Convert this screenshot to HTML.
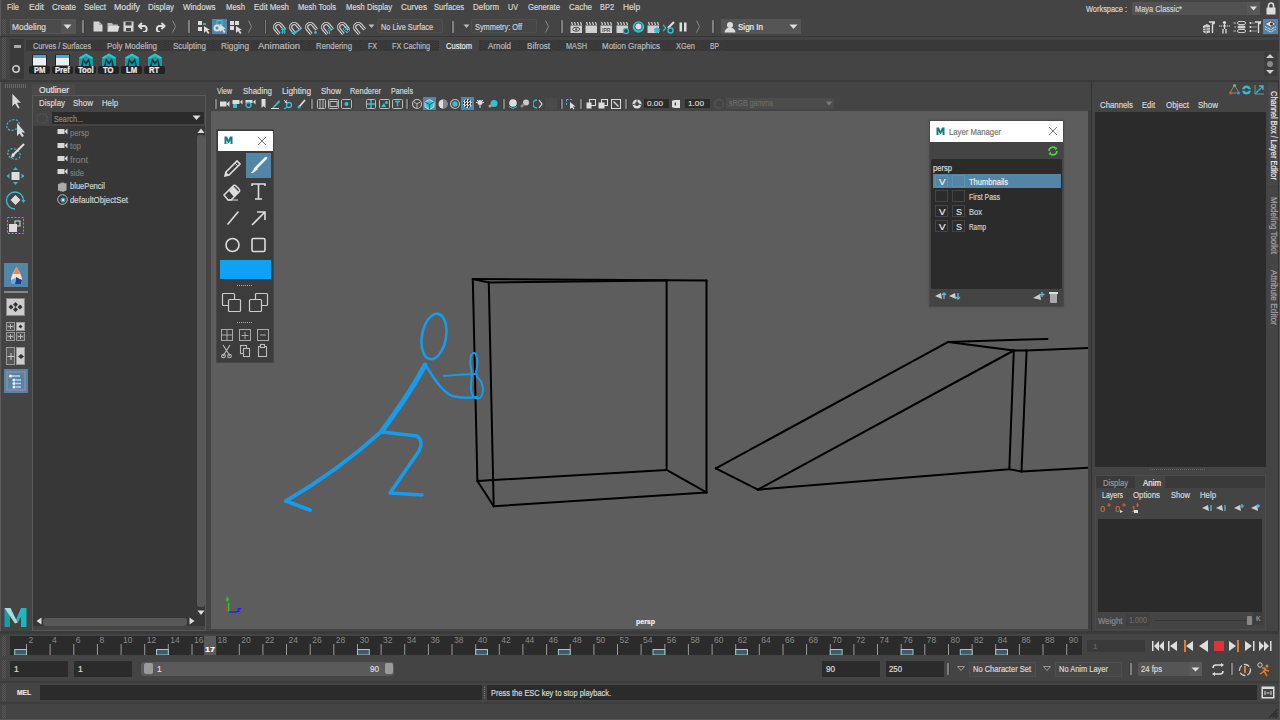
<!DOCTYPE html><html><head><meta charset="utf-8"><style>
html,body{margin:0;padding:0;width:1280px;height:720px;overflow:hidden;background:#444;}
body>div,body>svg{position:absolute;}
.t{position:absolute;white-space:nowrap;font-family:"Liberation Sans",sans-serif;-webkit-text-stroke:0.2px currentColor;}
svg text{font-family:"Liberation Sans",sans-serif;}
</style></head><body>
<div style="left:0px;top:0px;width:1280px;height:720px;background:#444444;"></div>
<div style="left:0px;top:0px;width:1px;height:720px;background:#5a5a5a;"></div>
<div class="t" style="left:6.5px;top:2.80px;font-size:8.5px;line-height:8.5px;color:#d6d6d6;transform:scaleX(0.876);transform-origin:0 0;">File</div>
<div class="t" style="left:28.75px;top:2.80px;font-size:8.5px;line-height:8.5px;color:#d6d6d6;transform:scaleX(1.024);transform-origin:0 0;">Edit</div>
<div class="t" style="left:51.75px;top:2.80px;font-size:8.5px;line-height:8.5px;color:#d6d6d6;transform:scaleX(0.941);transform-origin:0 0;">Create</div>
<div class="t" style="left:83.75px;top:2.80px;font-size:8.5px;line-height:8.5px;color:#d6d6d6;transform:scaleX(0.931);transform-origin:0 0;">Select</div>
<div class="t" style="left:113.75px;top:2.80px;font-size:8.5px;line-height:8.5px;color:#d6d6d6;transform:scaleX(1.039);transform-origin:0 0;">Modify</div>
<div class="t" style="left:148px;top:2.80px;font-size:8.5px;line-height:8.5px;color:#d6d6d6;transform:scaleX(0.933);transform-origin:0 0;">Display</div>
<div class="t" style="left:182.5px;top:2.80px;font-size:8.5px;line-height:8.5px;color:#d6d6d6;transform:scaleX(0.943);transform-origin:0 0;">Windows</div>
<div class="t" style="left:225.5px;top:2.80px;font-size:8.5px;line-height:8.5px;color:#d6d6d6;transform:scaleX(0.914);transform-origin:0 0;">Mesh</div>
<div class="t" style="left:253.75px;top:2.80px;font-size:8.5px;line-height:8.5px;color:#d6d6d6;transform:scaleX(0.926);transform-origin:0 0;">Edit Mesh</div>
<div class="t" style="left:297.5px;top:2.80px;font-size:8.5px;line-height:8.5px;color:#d6d6d6;transform:scaleX(0.887);transform-origin:0 0;">Mesh Tools</div>
<div class="t" style="left:345.75px;top:2.80px;font-size:8.5px;line-height:8.5px;color:#d6d6d6;transform:scaleX(0.902);transform-origin:0 0;">Mesh Display</div>
<div class="t" style="left:401.25px;top:2.80px;font-size:8.5px;line-height:8.5px;color:#d6d6d6;transform:scaleX(0.966);transform-origin:0 0;">Curves</div>
<div class="t" style="left:433.75px;top:2.80px;font-size:8.5px;line-height:8.5px;color:#d6d6d6;transform:scaleX(0.894);transform-origin:0 0;">Surfaces</div>
<div class="t" style="left:472.5px;top:2.80px;font-size:8.5px;line-height:8.5px;color:#d6d6d6;transform:scaleX(0.933);transform-origin:0 0;">Deform</div>
<div class="t" style="left:507.5px;top:2.80px;font-size:8.5px;line-height:8.5px;color:#d6d6d6;transform:scaleX(0.847);transform-origin:0 0;">UV</div>
<div class="t" style="left:528px;top:2.80px;font-size:8.5px;line-height:8.5px;color:#d6d6d6;transform:scaleX(0.903);transform-origin:0 0;">Generate</div>
<div class="t" style="left:569.25px;top:2.80px;font-size:8.5px;line-height:8.5px;color:#d6d6d6;transform:scaleX(0.936);transform-origin:0 0;">Cache</div>
<div class="t" style="left:599.5px;top:2.80px;font-size:8.5px;line-height:8.5px;color:#d6d6d6;transform:scaleX(0.871);transform-origin:0 0;">BP2</div>
<div class="t" style="left:622.5px;top:2.80px;font-size:8.5px;line-height:8.5px;color:#d6d6d6;transform:scaleX(0.972);transform-origin:0 0;">Help</div>
<div class="t" style="left:1085.5px;top:4.80px;font-size:8.5px;line-height:8.5px;color:#d6d6d6;transform:scaleX(0.871);transform-origin:0 0;">Workspace :</div>
<div style="left:1132px;top:2px;width:128px;height:13px;background:#525252;border-radius:1px;"></div>
<div style="left:1247px;top:2px;width:13px;height:13px;background:#585858;"></div>
<svg style="position:absolute;left:1249px;top:6px;" width="9" height="5" viewBox="0 0 9 5"><path d="M1 0.5 L8 0.5 L4.5 4.5Z" fill="#ddd"/></svg>
<div class="t" style="left:1134.5px;top:4.80px;font-size:8.5px;line-height:8.5px;color:#d0d0d0;transform:scaleX(0.873);transform-origin:0 0;">Maya Classic*</div>
<svg style="position:absolute;left:1265px;top:2px;" width="12" height="13" viewBox="0 0 12 13"><rect x="1.5" y="5.5" width="9" height="7" fill="#ddd"/><path d="M3.5 6 V3.5 a2.5 2.5 0 0 1 5 0 V6" stroke="#ddd" stroke-width="1.5" fill="none"/></svg>
<div style="left:0px;top:36px;width:1280px;height:1px;background:#363636;"></div>
<div style="left:2px;top:19px;width:4px;height:15px;background:repeating-conic-gradient(#585858 0 25%,#444 0 50%) 0 0/2px 2px;"></div>
<div style="left:10px;top:19px;width:66px;height:15px;background:#4b4b4b;border:1px solid #555;box-sizing:border-box;"></div>
<div style="left:61px;top:20px;width:14px;height:13px;background:#555;"></div>
<svg style="position:absolute;left:62px;top:24px;" width="11" height="6" viewBox="0 0 11 6"><path d="M1.5 0.5 L9.5 0.5 L5.5 5Z" fill="#ddd"/></svg>
<div class="t" style="left:12px;top:22.80px;font-size:8.5px;line-height:8.5px;color:#d8d8d8;transform:scaleX(0.986);transform-origin:0 0;">Modeling</div>
<div style="left:82px;top:20px;width:3px;height:13px;background:linear-gradient(90deg,#383838 0 0.5px,#808080 0.5px 2.5px,#383838 2.5px);border-radius:1px;"></div>
<svg style="position:absolute;left:93px;top:21px;" width="10" height="11" viewBox="0 0 10 11"><path d="M0.5 0.5 H6 L9.5 4 V10.5 H0.5Z" fill="#d4d4d4"/><path d="M6 0.5 V4 H9.5" fill="#aaa"/></svg>
<svg style="position:absolute;left:107px;top:21px;" width="13" height="11" viewBox="0 0 13 11"><path d="M0.5 2 H5 L6 3.5 H11 V10.5 H0.5Z" fill="#bbb"/><path d="M2 5 H12.5 L11 10.5 H0.5Z" fill="#ddd"/></svg>
<svg style="position:absolute;left:123px;top:21px;" width="11" height="11" viewBox="0 0 11 11"><rect x="0.5" y="0.5" width="10" height="10" fill="#d4d4d4"/><rect x="2.5" y="1" width="6" height="3.5" fill="#444"/><rect x="3" y="7" width="5" height="3" fill="#444"/></svg>
<svg style="position:absolute;left:138px;top:21px;" width="12" height="11" viewBox="0 0 12 11"><path d="M4 2 L1 5 L4 8" stroke="#ddd" stroke-width="2" fill="none"/><path d="M1.5 5 H7 a3.5 3.5 0 0 1 0 6 H5" stroke="#ddd" stroke-width="2" fill="none"/></svg>
<svg style="position:absolute;left:153px;top:21px;" width="13" height="11" viewBox="0 0 13 11"><path d="M8.5 2 L11.5 5 L8.5 8" stroke="#ddd" stroke-width="2" fill="none"/><path d="M11 5 H5.5 a3.5 3.5 0 0 0 0 6 H7" stroke="#ddd" stroke-width="2" fill="none"/></svg>
<svg style="position:absolute;left:172px;top:20px;" width="5" height="13" viewBox="0 0 5 13"><path d="M0.5 0.5 L3.5 6.5 L0.5 12.5" stroke="#888" stroke-width="1" fill="none"/></svg>
<div style="left:188px;top:20px;width:3px;height:13px;background:linear-gradient(90deg,#383838 0 0.5px,#808080 0.5px 2.5px,#383838 2.5px);border-radius:1px;"></div>
<svg style="position:absolute;left:197px;top:20px;" width="14" height="14" viewBox="0 0 14 14"><rect x="1" y="1" width="4" height="4" fill="#ddd"/><rect x="1" y="7" width="4" height="4" fill="#ddd"/><path d="M6 4 h3" stroke="#3cb" stroke-width="1.5"/><path d="M7 6 L7 13 L9 11 L11 14 L12.5 13 L10.5 10 L13 10Z" fill="#ddd"/></svg>
<div style="left:212px;top:19px;width:15px;height:15px;background:#5285a6;"></div>
<svg style="position:absolute;left:212px;top:19px;" width="15" height="15" viewBox="0 0 15 15"><rect x="5" y="1.5" width="5" height="4" stroke="#3cd" fill="none"/><circle cx="5" cy="9" r="3.5" fill="#ddd"/><circle cx="5" cy="9" r="1.5" fill="#5285a6"/><path d="M8 5 L8 13 L10 11 L12 14 L13.5 13 L11.5 10 L14 10Z" fill="#ddd"/></svg>
<svg style="position:absolute;left:229px;top:20px;" width="14" height="14" viewBox="0 0 14 14"><rect x="1" y="1" width="4" height="4" fill="#ddd"/><rect x="6" y="1" width="4" height="4" fill="#ddd"/><rect x="1" y="6" width="4" height="4" fill="#ddd"/><path d="M7 6 L7 13 L9 11 L11 14 L12.5 13 L10.5 10 L13 10Z" fill="#ddd"/></svg>
<svg style="position:absolute;left:248px;top:20px;" width="5" height="13" viewBox="0 0 5 13"><path d="M0.5 0.5 L3.5 6.5 L0.5 12.5" stroke="#888" stroke-width="1" fill="none"/></svg>
<div style="left:264px;top:20px;width:3px;height:13px;background:linear-gradient(90deg,#383838 0 0.5px,#808080 0.5px 2.5px,#383838 2.5px);border-radius:1px;"></div>
<svg style="position:absolute;left:272px;top:20px;" width="15" height="15" viewBox="0 0 15 15"><g transform="rotate(-40 6.5 7.5)"><path d="M3 13 V7 a3.5 3.5 0 0 1 7 0 V13" stroke="#d8d8d8" stroke-width="3.2" fill="none"/><path d="M3 13 V7 a3.5 3.5 0 0 1 7 0 V13" stroke="#444" stroke-width="1.1" fill="none"/></g><path d="M9 9.5 h5 M9 12 h5 M10.5 8 v6 M12.5 8 v6" stroke="#3bc" stroke-width="0.9"/></svg>
<svg style="position:absolute;left:288px;top:20px;" width="15" height="15" viewBox="0 0 15 15"><g transform="rotate(-40 6.5 7.5)"><path d="M3 13 V7 a3.5 3.5 0 0 1 7 0 V13" stroke="#d8d8d8" stroke-width="3.2" fill="none"/><path d="M3 13 V7 a3.5 3.5 0 0 1 7 0 V13" stroke="#444" stroke-width="1.1" fill="none"/></g><path d="M5 13 C8 12 11 11 13 8" stroke="#3bc" stroke-width="1.4" fill="none"/><circle cx="4.5" cy="13" r="1" fill="#3bc"/></svg>
<svg style="position:absolute;left:304px;top:20px;" width="15" height="15" viewBox="0 0 15 15"><g transform="rotate(-40 6.5 7.5)"><path d="M3 13 V7 a3.5 3.5 0 0 1 7 0 V13" stroke="#d8d8d8" stroke-width="3.2" fill="none"/><path d="M3 13 V7 a3.5 3.5 0 0 1 7 0 V13" stroke="#444" stroke-width="1.1" fill="none"/></g><circle cx="11.5" cy="12.5" r="1.4" fill="#3bc"/></svg>
<svg style="position:absolute;left:320px;top:20px;" width="15" height="15" viewBox="0 0 15 15"><g transform="rotate(-40 6.5 7.5)"><path d="M3 13 V7 a3.5 3.5 0 0 1 7 0 V13" stroke="#d8d8d8" stroke-width="3.2" fill="none"/><path d="M3 13 V7 a3.5 3.5 0 0 1 7 0 V13" stroke="#444" stroke-width="1.1" fill="none"/></g><circle cx="9.5" cy="9.5" r="1.3" fill="none" stroke="#3bc" stroke-width="0.9"/><path d="M9.5 11 v3 M13 3 v0.1" stroke="#3bc" stroke-width="1.2"/></svg>
<svg style="position:absolute;left:336px;top:20px;" width="15" height="15" viewBox="0 0 15 15"><g transform="rotate(-40 6.5 7.5)"><path d="M3 13 V7 a3.5 3.5 0 0 1 7 0 V13" stroke="#d8d8d8" stroke-width="3.2" fill="none"/><path d="M3 13 V7 a3.5 3.5 0 0 1 7 0 V13" stroke="#444" stroke-width="1.1" fill="none"/></g><path d="M7 9 L10 6 L14 10 L11 13Z M8.5 10.5 L12 7.5 M10 12 L13 9" stroke="#3bc" stroke-width="0.9" fill="none"/></svg>
<svg style="position:absolute;left:352px;top:20px;" width="15" height="15" viewBox="0 0 15 15"><g transform="rotate(-40 6.5 7.5)"><path d="M3 13 V7 a3.5 3.5 0 0 1 7 0 V13" stroke="#d8d8d8" stroke-width="3.2" fill="none"/><path d="M3 13 V7 a3.5 3.5 0 0 1 7 0 V13" stroke="#444" stroke-width="1.1" fill="none"/></g></svg>
<svg style="position:absolute;left:368px;top:24px;" width="7" height="5" viewBox="0 0 7 5"><path d="M0.5 0.5 H6.5 L3.5 4Z" fill="#bbb"/></svg>
<div style="left:377px;top:19px;width:66px;height:14px;background:#464646;border:1px solid #4e4e4e;box-sizing:border-box;border-radius:2px;"></div>
<div class="t" style="left:380.5px;top:22.80px;font-size:8.5px;line-height:8.5px;color:#d0d0d0;transform:scaleX(0.860);transform-origin:0 0;">No Live Surface</div>
<div style="left:451px;top:21px;width:3px;height:12px;background:linear-gradient(90deg,#383838 0 0.5px,#808080 0.5px 2.5px,#383838 2.5px);border-radius:1px;"></div>
<svg style="position:absolute;left:463px;top:24px;" width="7" height="5" viewBox="0 0 7 5"><path d="M0.5 0.5 H6.5 L3.5 4Z" fill="#bbb"/></svg>
<div style="left:471px;top:19px;width:66px;height:14px;background:#464646;border:1px solid #4e4e4e;box-sizing:border-box;border-radius:2px;"></div>
<div class="t" style="left:475px;top:22.80px;font-size:8.5px;line-height:8.5px;color:#d0d0d0;transform:scaleX(0.868);transform-origin:0 0;">Symmetry: Off</div>
<svg style="position:absolute;left:545px;top:20px;" width="5" height="13" viewBox="0 0 5 13"><path d="M0.5 0.5 L3.5 6.5 L0.5 12.5" stroke="#888" stroke-width="1" fill="none"/></svg>
<div style="left:560px;top:20px;width:3px;height:13px;background:linear-gradient(90deg,#383838 0 0.5px,#808080 0.5px 2.5px,#383838 2.5px);border-radius:1px;"></div>
<svg style="position:absolute;left:570px;top:20px;" width="13" height="14" viewBox="0 0 13 14"><path d="M1.5 2 l1 3 M4.5 2 l1 3 M7.5 2 l1 3 M10.5 2 l1 3" stroke="#d0d0d0" stroke-width="1.2"/><rect x="0.5" y="5.5" width="11.5" height="7.5" fill="#d0d0d0"/><ellipse cx="6.2" cy="9.2" rx="3.5" ry="2" fill="none" stroke="#444" stroke-width="1"/><circle cx="6.2" cy="9.2" r="1" fill="#444"/></svg>
<svg style="position:absolute;left:585px;top:20px;" width="13" height="14" viewBox="0 0 13 14"><path d="M1.5 2 l1 3 M4.5 2 l1 3 M7.5 2 l1 3 M10.5 2 l1 3" stroke="#d0d0d0" stroke-width="1.2"/><rect x="0.5" y="5.5" width="11.5" height="7.5" fill="#d0d0d0"/></svg>
<svg style="position:absolute;left:600px;top:20px;" width="13" height="14" viewBox="0 0 13 14"><path d="M1.5 2 l1 3 M4.5 2 l1 3 M7.5 2 l1 3 M10.5 2 l1 3" stroke="#d0d0d0" stroke-width="1.2"/><rect x="0.5" y="5.5" width="11.5" height="7.5" fill="#d0d0d0"/><text x="2" y="11.5" font-size="5" font-weight="bold" fill="#555" font-family="Liberation Sans">IPR</text></svg>
<svg style="position:absolute;left:616px;top:20px;" width="13" height="14" viewBox="0 0 13 14"><path d="M1.5 2 l1 3 M4.5 2 l1 3 M7.5 2 l1 3 M10.5 2 l1 3" stroke="#d0d0d0" stroke-width="1.2"/><rect x="0.5" y="5.5" width="11.5" height="7.5" fill="#d0d0d0"/><circle cx="10" cy="11" r="2.6" fill="#444" stroke="#3bc" stroke-width="1.3"/></svg>
<svg style="position:absolute;left:632px;top:20px;" width="13" height="14" viewBox="0 0 13 14"><circle cx="6.5" cy="7" r="5.8" fill="#3bc"/><circle cx="6.5" cy="6.5" r="3" fill="#ddd"/><circle cx="6.5" cy="6.5" r="3.6" fill="none" stroke="#1d6f78" stroke-width="0.8"/></svg>
<svg style="position:absolute;left:647px;top:20px;" width="13" height="14" viewBox="0 0 13 14"><path d="M1.5 2 l1 3 M4.5 2 l1 3 M7.5 2 l1 3 M10.5 2 l1 3" stroke="#d0d0d0" stroke-width="1.2"/><rect x="0.5" y="5.5" width="11.5" height="7.5" fill="#d0d0d0"/><path d="M10 7.5 L13 9.5 L10 11.5 L7 9.5Z M7 11 L10 13 L13 11" fill="#3bc" stroke="#3bc" stroke-width="0.8"/></svg>
<svg style="position:absolute;left:662px;top:20px;" width="14" height="14" viewBox="0 0 14 14"><path d="M6 8 L12 2" stroke="#ddd" stroke-width="2.2"/><circle cx="8.5" cy="10.5" r="2.5" stroke="#3bc" fill="none" stroke-width="1.5"/><path d="M1 5 l3 3 M1 11 l3 -3" stroke="#3bc" stroke-width="1.2"/></svg>
<svg style="position:absolute;left:679px;top:20px;" width="9" height="14" viewBox="0 0 9 14"><rect x="0.5" y="2.5" width="2.5" height="9" fill="#ddd"/><rect x="5" y="2.5" width="2.5" height="9" fill="#ddd"/></svg>
<svg style="position:absolute;left:696px;top:20px;" width="5" height="13" viewBox="0 0 5 13"><path d="M0.5 0.5 L3.5 6.5 L0.5 12.5" stroke="#888" stroke-width="1" fill="none"/></svg>
<div style="left:712px;top:20px;width:3px;height:13px;background:linear-gradient(90deg,#383838 0 0.5px,#808080 0.5px 2.5px,#383838 2.5px);border-radius:1px;"></div>
<div style="left:721px;top:19px;width:80px;height:15px;background:#555555;border-radius:1px;"></div>
<svg style="position:absolute;left:724px;top:21px;" width="12" height="12" viewBox="0 0 12 12"><circle cx="6" cy="4" r="3" fill="#ddd"/><path d="M0.5 11.5 a5.5 5 0 0 1 11 0Z" fill="#ddd"/></svg>
<div class="t" style="left:738px;top:22.80px;font-size:8.5px;line-height:8.5px;color:#eeeeee;transform:scaleX(0.945);transform-origin:0 0;">Sign In</div>
<svg style="position:absolute;left:789px;top:24px;" width="9" height="6" viewBox="0 0 9 6"><path d="M0.5 0.5 H8.5 L4.5 5Z" fill="#ddd"/></svg>
<svg style="position:absolute;left:1202px;top:20px;" width="13" height="14" viewBox="0 0 13 14"><path d="M1 6 L5 4 L8 5.5 V12.5 L4 13.5 L1 12Z" fill="#cfcfcf"/><path d="M4 6.5 V13 M1 8.5 L8 7.5 M1 10.5 L8 10" stroke="#555" stroke-width="0.8"/><path d="M7 2 H12.5 L12 3.5 H10.5 V13" stroke="#d8d8d8" stroke-width="1.4" fill="none"/></svg>
<svg style="position:absolute;left:1218px;top:20px;" width="13" height="14" viewBox="0 0 13 14"><circle cx="6.5" cy="2.5" r="1.6" fill="#ddd"/><path d="M1 6 H12" stroke="#ddd" stroke-width="1.2" stroke-dasharray="1.3 0.7"/><path d="M6.5 4 V9 M5 9 V13.5 M8 9 V13.5" stroke="#ddd" stroke-width="1.3"/></svg>
<svg style="position:absolute;left:1233px;top:20px;" width="14" height="14" viewBox="0 0 14 14"><path d="M0.5 3 H3 M1.5 7 H3 M0.5 11 H3" stroke="#ccc" stroke-width="0.9"/><rect x="4.5" y="1.5" width="8" height="3" rx="1.5" fill="none" stroke="#ccc"/><rect x="4.5" y="5.5" width="8" height="3" rx="1.5" fill="#ccc"/><rect x="4.5" y="9.5" width="8" height="3" rx="1.5" fill="none" stroke="#ccc"/></svg>
<svg style="position:absolute;left:1249px;top:20px;" width="13" height="14" viewBox="0 0 13 14"><circle cx="1.5" cy="3" r="1.1" fill="#ddd"/><circle cx="1.5" cy="7" r="1.1" fill="#ddd"/><circle cx="1.5" cy="11" r="1.1" fill="#ddd"/><path d="M3 3 H6 M3 7 H8 M3 11 H8" stroke="#999" stroke-width="0.9"/><path d="M6 2 H11.5 L11 3.5 H9.5 V13" stroke="#ddd" stroke-width="1.3" fill="none"/></svg>
<div style="left:1263px;top:19px;width:15px;height:15px;background:#5285a6;"></div>
<svg style="position:absolute;left:1263px;top:19px;" width="15" height="15" viewBox="0 0 15 15"><path d="M7.5 2 L13 5 L7.5 8 L2 5Z" fill="#ddd" stroke="#333" stroke-width="0.5"/><path d="M2 7.5 L7.5 10.5 L13 7.5 M2 10 L7.5 13 L13 10" fill="none" stroke="#ddd" stroke-width="1.1" stroke-dasharray="1 0.6"/><circle cx="8.5" cy="5" r="1.5" fill="#333"/></svg>
<div style="left:0px;top:37px;width:1280px;height:44px;background:#444444;"></div>
<div style="left:2px;top:38px;width:4px;height:41px;background:repeating-conic-gradient(#585858 0 25%,#444 0 50%) 0 0/2px 2px;"></div>
<div style="left:10px;top:39px;width:14px;height:40px;background:#3a3a3a;"></div>
<div style="left:14px;top:45px;width:7px;height:3px;background:#aaa;"></div>
<svg style="position:absolute;left:11px;top:64px;" width="10" height="10" viewBox="0 0 10 10"><circle cx="5" cy="5" r="3.2" fill="none" stroke="#ccc" stroke-width="1.6"/></svg>
<div style="left:26px;top:40px;width:1254px;height:11px;background:#393939;"></div>
<div style="left:438px;top:40px;width:41px;height:11px;background:#454545;"></div>
<div class="t" style="left:33.25px;top:42.30px;font-size:8.5px;line-height:8.5px;color:#b8b8b8;transform:scaleX(0.859);transform-origin:0 0;">Curves / Surfaces</div>
<div class="t" style="left:107px;top:42.30px;font-size:8.5px;line-height:8.5px;color:#b8b8b8;transform:scaleX(0.937);transform-origin:0 0;">Poly Modeling</div>
<div class="t" style="left:172.5px;top:42.30px;font-size:8.5px;line-height:8.5px;color:#b8b8b8;transform:scaleX(0.944);transform-origin:0 0;">Sculpting</div>
<div class="t" style="left:221px;top:42.30px;font-size:8.5px;line-height:8.5px;color:#b8b8b8;transform:scaleX(0.971);transform-origin:0 0;">Rigging</div>
<div class="t" style="left:258px;top:42.30px;font-size:8.5px;line-height:8.5px;color:#b8b8b8;transform:scaleX(1.111);transform-origin:0 0;">Animation</div>
<div class="t" style="left:316px;top:42.30px;font-size:8.5px;line-height:8.5px;color:#b8b8b8;transform:scaleX(0.918);transform-origin:0 0;">Rendering</div>
<div class="t" style="left:367.5px;top:42.30px;font-size:8.5px;line-height:8.5px;color:#b8b8b8;transform:scaleX(0.829);transform-origin:0 0;">FX</div>
<div class="t" style="left:392px;top:42.30px;font-size:8.5px;line-height:8.5px;color:#b8b8b8;transform:scaleX(0.856);transform-origin:0 0;">FX Caching</div>
<div class="t" style="left:446px;top:42.30px;font-size:8.5px;line-height:8.5px;color:#e8e8e8;transform:scaleX(0.888);transform-origin:0 0;">Custom</div>
<div class="t" style="left:488px;top:42.30px;font-size:8.5px;line-height:8.5px;color:#b8b8b8;transform:scaleX(0.936);transform-origin:0 0;">Arnold</div>
<div class="t" style="left:527px;top:42.30px;font-size:8.5px;line-height:8.5px;color:#b8b8b8;transform:scaleX(0.955);transform-origin:0 0;">Bifrost</div>
<div class="t" style="left:566px;top:42.30px;font-size:8.5px;line-height:8.5px;color:#b8b8b8;transform:scaleX(0.855);transform-origin:0 0;">MASH</div>
<div class="t" style="left:602px;top:42.30px;font-size:8.5px;line-height:8.5px;color:#b8b8b8;transform:scaleX(0.937);transform-origin:0 0;">Motion Graphics</div>
<div class="t" style="left:675.5px;top:42.30px;font-size:8.5px;line-height:8.5px;color:#b8b8b8;transform:scaleX(0.874);transform-origin:0 0;">XGen</div>
<div class="t" style="left:710px;top:42.30px;font-size:8.5px;line-height:8.5px;color:#b8b8b8;transform:scaleX(0.794);transform-origin:0 0;">BP</div>
<div style="left:100px;top:41px;width:1px;height:9px;background:repeating-linear-gradient(#2a2a2a 0 1px,#444 1px 2px);"></div>
<div style="left:165px;top:41px;width:1px;height:9px;background:repeating-linear-gradient(#2a2a2a 0 1px,#444 1px 2px);"></div>
<div style="left:213px;top:41px;width:1px;height:9px;background:repeating-linear-gradient(#2a2a2a 0 1px,#444 1px 2px);"></div>
<div style="left:257px;top:41px;width:1px;height:9px;background:repeating-linear-gradient(#2a2a2a 0 1px,#444 1px 2px);"></div>
<div style="left:309px;top:41px;width:1px;height:9px;background:repeating-linear-gradient(#2a2a2a 0 1px,#444 1px 2px);"></div>
<div style="left:360px;top:41px;width:1px;height:9px;background:repeating-linear-gradient(#2a2a2a 0 1px,#444 1px 2px);"></div>
<div style="left:385px;top:41px;width:1px;height:9px;background:repeating-linear-gradient(#2a2a2a 0 1px,#444 1px 2px);"></div>
<div style="left:438px;top:41px;width:1px;height:9px;background:repeating-linear-gradient(#2a2a2a 0 1px,#444 1px 2px);"></div>
<div style="left:480px;top:41px;width:1px;height:9px;background:repeating-linear-gradient(#2a2a2a 0 1px,#444 1px 2px);"></div>
<div style="left:519px;top:41px;width:1px;height:9px;background:repeating-linear-gradient(#2a2a2a 0 1px,#444 1px 2px);"></div>
<div style="left:558px;top:41px;width:1px;height:9px;background:repeating-linear-gradient(#2a2a2a 0 1px,#444 1px 2px);"></div>
<div style="left:595px;top:41px;width:1px;height:9px;background:repeating-linear-gradient(#2a2a2a 0 1px,#444 1px 2px);"></div>
<div style="left:668px;top:41px;width:1px;height:9px;background:repeating-linear-gradient(#2a2a2a 0 1px,#444 1px 2px);"></div>
<div style="left:702px;top:41px;width:1px;height:9px;background:repeating-linear-gradient(#2a2a2a 0 1px,#444 1px 2px);"></div>
<div style="left:726px;top:41px;width:1px;height:9px;background:repeating-linear-gradient(#2a2a2a 0 1px,#444 1px 2px);"></div>
<svg style="position:absolute;left:31px;top:54px;" width="18" height="13" viewBox="0 0 18 13"><rect x="1.5" y="1" width="14" height="11" fill="#eee" stroke="#222" stroke-width="1"/><rect x="2" y="1.5" width="13" height="2.5" fill="#4aa8d8"/></svg>
<svg style="position:absolute;left:54px;top:54px;" width="18" height="13" viewBox="0 0 18 13"><rect x="1.5" y="1" width="14" height="11" fill="#eee" stroke="#222" stroke-width="1"/><rect x="2" y="1.5" width="13" height="2.5" fill="#4aa8d8"/></svg>
<svg style="position:absolute;left:77px;top:53px;" width="18" height="14" viewBox="0 0 18 14"><path d="M9 0.5 L16 4.5 V13.5 H2 V4.5Z" fill="#1b9aa4"/><path d="M4 13 L6 5 L9 9 L12 5 L14 13 H12 L11.5 8.5 L9 12 L6.5 8.5 L6 13Z" fill="#0c3a40"/><path d="M9 0.5 L16 4.5 L14 6 L9 3 L4 6 L2 4.5Z" fill="#2cc4cc"/></svg>
<svg style="position:absolute;left:100px;top:53px;" width="18" height="14" viewBox="0 0 18 14"><path d="M9 0.5 L16 4.5 V13.5 H2 V4.5Z" fill="#1b9aa4"/><path d="M4 13 L6 5 L9 9 L12 5 L14 13 H12 L11.5 8.5 L9 12 L6.5 8.5 L6 13Z" fill="#0c3a40"/><path d="M9 0.5 L16 4.5 L14 6 L9 3 L4 6 L2 4.5Z" fill="#2cc4cc"/></svg>
<svg style="position:absolute;left:123px;top:53px;" width="18" height="14" viewBox="0 0 18 14"><path d="M9 0.5 L16 4.5 V13.5 H2 V4.5Z" fill="#1b9aa4"/><path d="M4 13 L6 5 L9 9 L12 5 L14 13 H12 L11.5 8.5 L9 12 L6.5 8.5 L6 13Z" fill="#0c3a40"/><path d="M9 0.5 L16 4.5 L14 6 L9 3 L4 6 L2 4.5Z" fill="#2cc4cc"/></svg>
<svg style="position:absolute;left:146px;top:53px;" width="18" height="14" viewBox="0 0 18 14"><path d="M9 0.5 L16 4.5 V13.5 H2 V4.5Z" fill="#1b9aa4"/><path d="M4 13 L6 5 L9 9 L12 5 L14 13 H12 L11.5 8.5 L9 12 L6.5 8.5 L6 13Z" fill="#0c3a40"/><path d="M9 0.5 L16 4.5 L14 6 L9 3 L4 6 L2 4.5Z" fill="#2cc4cc"/></svg>
<div style="left:29px;top:66px;width:21px;height:8px;background:#222222;border-radius:2px;"></div>
<div class="t" style="left:33.7625px;top:65.80px;font-size:8.5px;line-height:8.5px;color:#eeeeee;font-weight:bold;transform:scaleX(0.900);transform-origin:0 0;">PM</div>
<div style="left:52px;top:66px;width:21px;height:8px;background:#222222;border-radius:2px;"></div>
<div class="t" style="left:55.0591796875px;top:65.80px;font-size:8.5px;line-height:8.5px;color:#eeeeee;font-weight:bold;transform:scaleX(0.900);transform-origin:0 0;">Pref</div>
<div style="left:75px;top:66px;width:21px;height:8px;background:#222222;border-radius:2px;"></div>
<div class="t" style="left:77.7125390625px;top:65.80px;font-size:8.5px;line-height:8.5px;color:#eeeeee;font-weight:bold;transform:scaleX(0.900);transform-origin:0 0;">Tool</div>
<div style="left:98px;top:66px;width:21px;height:8px;background:#222222;border-radius:2px;"></div>
<div class="t" style="left:103.25795703125px;top:65.80px;font-size:8.5px;line-height:8.5px;color:#eeeeee;font-weight:bold;transform:scaleX(0.900);transform-origin:0 0;">TO</div>
<div style="left:121px;top:66px;width:21px;height:8px;background:#222222;border-radius:2px;"></div>
<div class="t" style="left:125.97765625px;top:65.80px;font-size:8.5px;line-height:8.5px;color:#eeeeee;font-weight:bold;transform:scaleX(0.900);transform-origin:0 0;">LM</div>
<div style="left:144px;top:66px;width:21px;height:8px;background:#222222;border-radius:2px;"></div>
<div class="t" style="left:149.40139453125px;top:65.80px;font-size:8.5px;line-height:8.5px;color:#eeeeee;font-weight:bold;transform:scaleX(0.900);transform-origin:0 0;">RT</div>
<div style="left:1264px;top:52px;width:13px;height:24px;background:#3c3c3c;"></div>
<svg style="position:absolute;left:1265px;top:53px;" width="10" height="22" viewBox="0 0 10 22"><path d="M1 5 L5 1 L9 5Z" fill="#ccc"/><circle cx="5" cy="11" r="3" fill="#888"/><path d="M1 17 L5 21 L9 17Z" fill="#ccc"/></svg>
<div style="left:0px;top:80px;width:1280px;height:2px;background:#3a3a3a;"></div>
<div style="left:1px;top:82px;width:29px;height:549px;background:#444444;"></div>
<div style="left:5px;top:84px;width:22px;height:4px;background:repeating-linear-gradient(90deg,#666 0 1px,#444 1px 2px);"></div>
<svg style="position:absolute;left:8px;top:92px;" width="14" height="18" viewBox="0 0 14 18"><path d="M4 1 L4 15 L7 12 L10 17 L12 16 L9.5 11 L13.5 11Z" fill="#d8d8d8" stroke="#333" stroke-width="0.6"/></svg>
<svg style="position:absolute;left:5px;top:115px;" width="21" height="22" viewBox="0 0 21 22"><ellipse cx="8" cy="10" rx="6.5" ry="5" fill="none" stroke="#3bc" stroke-width="1.3" stroke-dasharray="2 1.5" transform="rotate(-25 8 10)"/><path d="M12 8 L12 21 L14.5 18.5 L17 22 L19 21 L16.5 17.5 L20 17.5Z" fill="#d8d8d8"/></svg>
<svg style="position:absolute;left:5px;top:141px;" width="21" height="21" viewBox="0 0 21 21"><ellipse cx="9" cy="13" rx="6.5" ry="5" fill="none" stroke="#3bc" stroke-width="1.3" stroke-dasharray="2 1.5" transform="rotate(25 9 13)"/><path d="M8 14 L19 3" stroke="#ddd" stroke-width="2.2"/><path d="M7 12 L10 15 L6 17Z" fill="#ddd"/></svg>
<svg style="position:absolute;left:5px;top:166px;" width="21" height="20" viewBox="0 0 21 20"><rect x="6.5" y="6" width="8" height="8" fill="#ddd"/><path d="M10.5 1 L13 4 H8Z M10.5 19 L13 16 H8Z M1.5 10 L4.5 7.5 V12.5Z M19.5 10 L16.5 7.5 V12.5Z" fill="#3bc"/></svg>
<svg style="position:absolute;left:4px;top:189px;" width="23" height="23" viewBox="0 0 23 23"><path d="M11 20 A8.5 8.5 0 1 1 19.5 11.5" fill="none" stroke="#3bc" stroke-width="1.4"/><path d="M11.5 6 L16.5 11 L11.5 16 L6.5 11Z" fill="#ddd"/><path d="M17.5 11 L21.5 11 L19.5 14Z" fill="#3bc"/></svg>
<svg style="position:absolute;left:6px;top:216px;" width="20" height="20" viewBox="0 0 20 20"><rect x="1.5" y="1.5" width="16" height="16" fill="none" stroke="#3bc" stroke-dasharray="2 1.5"/><rect x="3" y="8" width="8" height="8" fill="#ddd"/><rect x="9" y="5" width="5" height="5" fill="none" stroke="#ddd"/></svg>
<div style="left:4px;top:263px;width:24px;height:24px;background:#5285a6;"></div>
<svg style="position:absolute;left:4px;top:263px;" width="24" height="24" viewBox="0 0 24 24"><path d="M12.5 4 C15 8 18 13 18 17 L17 21 H8 L7 17 C7 13 10 8 12.5 4Z" fill="#f3e3d3"/><path d="M12.5 4 C14 7 15.5 9 16 11 L9 11 C10 9 11 7 12.5 4Z" fill="#e88a50"/><path d="M12 14 L18 17 L17 21 H11Z" fill="#1c3f96"/><path d="M7 17 L11 15 L11 21 H8Z" fill="#6aa8e0"/></svg>
<div style="left:4px;top:291px;width:24px;height:2px;background:#888;"></div>
<div style="left:6px;top:298px;width:19px;height:18px;background:#cccccc;border:1px solid #888;box-sizing:border-box;"></div>
<svg style="position:absolute;left:6px;top:298px;" width="19" height="18" viewBox="0 0 19 18"><path d="M9.5 4 L12 6.5 L9.5 9 L7 6.5Z M9.5 9 L12 11.5 L9.5 14 L7 11.5Z M5 6.5 L7.5 9 L5 11.5 L2.5 9Z M14 6.5 L16.5 9 L14 11.5 L11.5 9Z" fill="#333"/></svg>
<div style="left:6px;top:322px;width:9px;height:9px;background:#505050;border:1px solid #999;box-sizing:border-box;"></div>
<svg style="position:absolute;left:6px;top:322px;" width="9" height="9" viewBox="0 0 9 9"><path d="M4.5 2 V7 M2 4.5 H7" stroke="#bbb" stroke-width="1"/><path d="M2 3 v3 M7 3 v3" stroke="#888"/></svg>
<div style="left:16px;top:322px;width:9px;height:9px;background:#cccccc;border:1px solid #999;box-sizing:border-box;"></div>
<svg style="position:absolute;left:16px;top:322px;" width="9" height="9" viewBox="0 0 9 9"><path d="M4.5 2.5 L6.5 4.5 L4.5 6.5 L2.5 4.5Z" fill="#333"/></svg>
<div style="left:6px;top:332px;width:9px;height:9px;background:#505050;border:1px solid #999;box-sizing:border-box;"></div>
<svg style="position:absolute;left:6px;top:332px;" width="9" height="9" viewBox="0 0 9 9"><path d="M4.5 2 V7 M2 4.5 H7" stroke="#bbb" stroke-width="1"/><path d="M2 3 v3 M7 3 v3" stroke="#888"/></svg>
<div style="left:16px;top:332px;width:9px;height:9px;background:#505050;border:1px solid #999;box-sizing:border-box;"></div>
<svg style="position:absolute;left:16px;top:332px;" width="9" height="9" viewBox="0 0 9 9"><path d="M4.5 2 V7 M2 4.5 H7" stroke="#bbb" stroke-width="1"/><path d="M2 3 v3 M7 3 v3" stroke="#888"/></svg>
<div style="left:6px;top:347px;width:9px;height:18px;background:#555;border:1px solid #999;box-sizing:border-box;"></div>
<div style="left:16px;top:347px;width:9px;height:18px;background:#cccccc;border:1px solid #999;box-sizing:border-box;"></div>
<svg style="position:absolute;left:7px;top:353px;" width="8" height="7" viewBox="0 0 8 7"><path d="M4 0 V7 M0.5 3.5 H7.5" stroke="#ccc"/></svg>
<svg style="position:absolute;left:17px;top:353px;" width="8" height="7" viewBox="0 0 8 7"><path d="M4 1 L7 3.5 L4 6 L1 3.5Z" fill="#333"/></svg>
<div style="left:4px;top:369px;width:24px;height:24px;background:#5285a6;"></div>
<svg style="position:absolute;left:4px;top:369px;" width="24" height="24" viewBox="0 0 24 24"><rect x="3" y="3" width="18" height="18" fill="none" stroke="#b89" stroke-width="1"/><circle cx="6.5" cy="7" r="1.6" fill="#eee"/><circle cx="10" cy="11" r="1.6" fill="#eee"/><circle cx="10" cy="14.5" r="1.6" fill="#eee"/><circle cx="10" cy="18" r="1.6" fill="#eee"/><path d="M8 7 h8 M12 11 h5 M12 14.5 h5 M12 18 h5" stroke="#ccd" stroke-width="1.3"/></svg>
<svg style="position:absolute;left:0px;top:600px;" width="30" height="30" viewBox="0 0 30 30"><path d="M4.5 8 H10 V27 H4.5Z" fill="#1a9ca6"/><path d="M21 8 H26.5 V27 H21Z" fill="#1db6be"/><path d="M21 8 H26 L17.5 23 H14.5Z" fill="#22b8c0"/><path d="M4.5 8 H10.5 L17.5 22.5 L15 23.5Z" fill="#a9dade"/></svg>
<div style="left:31px;top:82px;width:176px;height:549px;background:#444444;"></div>
<div style="left:32px;top:84px;width:43px;height:11px;background:#4a4a4a;"></div>
<div class="t" style="left:38.5px;top:86.30px;font-size:8.5px;line-height:8.5px;color:#e0e0e0;transform:scaleX(1.008);transform-origin:0 0;">Outliner</div>
<div style="left:32px;top:95px;width:174px;height:536px;background:#373737;border:1px solid #5a5a5a;box-sizing:border-box;"></div>
<div style="left:33px;top:96px;width:172px;height:15px;background:#444444;"></div>
<div class="t" style="left:38.5px;top:98.80px;font-size:8.5px;line-height:8.5px;color:#d6d6d6;transform:scaleX(0.933);transform-origin:0 0;">Display</div>
<div class="t" style="left:73px;top:98.80px;font-size:8.5px;line-height:8.5px;color:#d6d6d6;transform:scaleX(0.941);transform-origin:0 0;">Show</div>
<div class="t" style="left:102px;top:98.80px;font-size:8.5px;line-height:8.5px;color:#d6d6d6;transform:scaleX(0.915);transform-origin:0 0;">Help</div>
<div style="left:33px;top:111px;width:172px;height:15px;background:#444444;"></div>
<svg style="position:absolute;left:36px;top:113px;" width="12" height="11" viewBox="0 0 12 11"><path d="M3 1 H9 L11 3 V8 L9 10 H3 L1 8 V3Z" fill="none" stroke="#555" stroke-width="1.2" stroke-dasharray="2 1"/></svg>
<div style="left:52px;top:112px;width:152px;height:12px;background:#2b2b2b;"></div>
<div class="t" style="left:54px;top:114.80px;font-size:8.5px;line-height:8.5px;color:#888888;transform:scaleX(0.853);transform-origin:0 0;">Search...</div>
<svg style="position:absolute;left:192px;top:115px;" width="9" height="6" viewBox="0 0 9 6"><path d="M0.5 0.5 H8.5 L4.5 5Z" fill="#ddd"/></svg>
<svg style="position:absolute;left:57px;top:128px;" width="11" height="7" viewBox="0 0 11 7"><rect x="0.5" y="1" width="7" height="5" fill="#d8d8d8"/><path d="M7.5 3.5 L10.5 0.5 V6.5Z" fill="#d8d8d8"/></svg>
<div class="t" style="left:70px;top:128.80px;font-size:8.5px;line-height:8.5px;color:#7b7b7b;transform:scaleX(0.894);transform-origin:0 0;">persp</div>
<svg style="position:absolute;left:57px;top:141.5px;" width="11" height="7" viewBox="0 0 11 7"><rect x="0.5" y="1" width="7" height="5" fill="#d8d8d8"/><path d="M7.5 3.5 L10.5 0.5 V6.5Z" fill="#d8d8d8"/></svg>
<div class="t" style="left:70px;top:142.30px;font-size:8.5px;line-height:8.5px;color:#7b7b7b;transform:scaleX(0.931);transform-origin:0 0;">top</div>
<svg style="position:absolute;left:57px;top:154.8px;" width="11" height="7" viewBox="0 0 11 7"><rect x="0.5" y="1" width="7" height="5" fill="#d8d8d8"/><path d="M7.5 3.5 L10.5 0.5 V6.5Z" fill="#d8d8d8"/></svg>
<div class="t" style="left:70px;top:155.60px;font-size:8.5px;line-height:8.5px;color:#7b7b7b;transform:scaleX(1.058);transform-origin:0 0;">front</div>
<svg style="position:absolute;left:57px;top:168px;" width="11" height="7" viewBox="0 0 11 7"><rect x="0.5" y="1" width="7" height="5" fill="#d8d8d8"/><path d="M7.5 3.5 L10.5 0.5 V6.5Z" fill="#d8d8d8"/></svg>
<div class="t" style="left:70px;top:168.80px;font-size:8.5px;line-height:8.5px;color:#7b7b7b;transform:scaleX(0.898);transform-origin:0 0;">side</div>
<svg style="position:absolute;left:57px;top:180.5px;" width="11" height="11" viewBox="0 0 11 11"><path d="M1 3 L5 1 L10 2.5 V9 L6 11 L1 9.5Z" fill="#777"/><path d="M2 3 V9.5 M4 2.5 V10 M6 2 V10.5 M8 2.5 V10" stroke="#e0e0e0" stroke-width="1"/></svg>
<div class="t" style="left:70px;top:182.30px;font-size:8.5px;line-height:8.5px;color:#d0d0d0;transform:scaleX(0.892);transform-origin:0 0;">bluePencil</div>
<svg style="position:absolute;left:57px;top:194px;" width="11" height="11" viewBox="0 0 11 11"><circle cx="5.5" cy="5.5" r="4.8" fill="none" stroke="#bbb"/><circle cx="6" cy="6" r="2.5" fill="#3aa"/><circle cx="6" cy="6" r="1.2" fill="#ddd"/></svg>
<div class="t" style="left:70px;top:195.80px;font-size:8.5px;line-height:8.5px;color:#d0d0d0;transform:scaleX(0.923);transform-origin:0 0;">defaultObjectSet</div>
<svg style="position:absolute;left:197px;top:128px;" width="8" height="6" viewBox="0 0 8 6"><path d="M0.5 5 L4 0.5 L7.5 5Z" fill="#ddd"/></svg>
<div style="left:197px;top:135px;width:8px;height:472px;background:#585858;border-radius:3px;"></div>
<svg style="position:absolute;left:197px;top:610px;" width="8" height="6" viewBox="0 0 8 6"><path d="M0.5 0.5 L4 5 L7.5 0.5Z" fill="#ddd"/></svg>
<svg style="position:absolute;left:36px;top:617px;" width="6" height="8" viewBox="0 0 6 8"><path d="M5.5 0.5 L0.5 4 L5.5 7.5Z" fill="#ddd"/></svg>
<div style="left:43px;top:618px;width:144px;height:8px;background:#585858;border-radius:3px;"></div>
<svg style="position:absolute;left:189px;top:617px;" width="6" height="8" viewBox="0 0 6 8"><path d="M0.5 0.5 L5.5 4 L0.5 7.5Z" fill="#ddd"/></svg>
<div style="left:33px;top:626px;width:172px;height:4px;background:#444;"></div>
<div style="left:208px;top:82px;width:883px;height:549px;background:#444444;"></div>
<div style="left:1091px;top:82px;width:1px;height:549px;background:#333333;"></div>
<div class="t" style="left:217px;top:86.80px;font-size:8.5px;line-height:8.5px;color:#d6d6d6;transform:scaleX(0.821);transform-origin:0 0;">View</div>
<div class="t" style="left:243px;top:86.80px;font-size:8.5px;line-height:8.5px;color:#d6d6d6;transform:scaleX(0.930);transform-origin:0 0;">Shading</div>
<div class="t" style="left:281.5px;top:86.80px;font-size:8.5px;line-height:8.5px;color:#d6d6d6;transform:scaleX(0.974);transform-origin:0 0;">Lighting</div>
<div class="t" style="left:320.5px;top:86.80px;font-size:8.5px;line-height:8.5px;color:#d6d6d6;transform:scaleX(0.941);transform-origin:0 0;">Show</div>
<div class="t" style="left:350px;top:86.80px;font-size:8.5px;line-height:8.5px;color:#d6d6d6;transform:scaleX(0.875);transform-origin:0 0;">Renderer</div>
<div class="t" style="left:391px;top:86.80px;font-size:8.5px;line-height:8.5px;color:#d6d6d6;transform:scaleX(0.847);transform-origin:0 0;">Panels</div>
<div style="left:214px;top:99px;width:3px;height:10px;background:linear-gradient(90deg,#383838 0 0.5px,#808080 0.5px 2.5px,#383838 2.5px);border-radius:1px;"></div>
<div style="left:310px;top:99px;width:3px;height:10px;background:linear-gradient(90deg,#383838 0 0.5px,#808080 0.5px 2.5px,#383838 2.5px);border-radius:1px;"></div>
<div style="left:406px;top:99px;width:3px;height:10px;background:linear-gradient(90deg,#383838 0 0.5px,#808080 0.5px 2.5px,#383838 2.5px);border-radius:1px;"></div>
<div style="left:502px;top:99px;width:3px;height:10px;background:linear-gradient(90deg,#383838 0 0.5px,#808080 0.5px 2.5px,#383838 2.5px);border-radius:1px;"></div>
<div style="left:560px;top:99px;width:3px;height:10px;background:linear-gradient(90deg,#383838 0 0.5px,#808080 0.5px 2.5px,#383838 2.5px);border-radius:1px;"></div>
<div style="left:580px;top:99px;width:3px;height:10px;background:linear-gradient(90deg,#383838 0 0.5px,#808080 0.5px 2.5px,#383838 2.5px);border-radius:1px;"></div>
<div style="left:625px;top:99px;width:3px;height:10px;background:linear-gradient(90deg,#383838 0 0.5px,#808080 0.5px 2.5px,#383838 2.5px);border-radius:1px;"></div>
<svg style="position:absolute;left:220px;top:99px;" width="11" height="11" viewBox="0 0 11 11"><rect x="0" y="2.5" width="6.5" height="5" fill="#ddd"/><path d="M6.5 5 L9.5 2 V8Z" fill="#ddd"/></svg>
<svg style="position:absolute;left:232px;top:99px;" width="11" height="11" viewBox="0 0 11 11"><rect x="0.5" y="1" width="7" height="4" fill="#ddd"/><path d="M8 3 L10.5 0.5 V5.5Z" fill="#ddd"/><rect x="1" y="5" width="4" height="4" fill="#35c0d0"/></svg>
<svg style="position:absolute;left:245px;top:99px;" width="11" height="11" viewBox="0 0 11 11"><rect x="0.5" y="1" width="7" height="3" fill="#ddd"/><path d="M8 3 L10.5 0.5 V5.5Z" fill="#ddd"/><circle cx="3.5" cy="6" r="2.5" fill="none" stroke="#35c0d0" stroke-width="1.3"/></svg>
<svg style="position:absolute;left:261px;top:99px;" width="11" height="11" viewBox="0 0 11 11"><path d="M0.5 0 H4.5 V9 L2.5 7 L0.5 9Z" fill="#ddd"/></svg>
<svg style="position:absolute;left:271px;top:99px;" width="11" height="11" viewBox="0 0 11 11"><path d="M1 9 L8 1 L9 3 L3 9Z" fill="#35c0d0"/><path d="M0 9.5 h8" stroke="#ddd"/></svg>
<svg style="position:absolute;left:283px;top:99px;" width="11" height="11" viewBox="0 0 11 11"><circle cx="6" cy="6" r="2.5" fill="none" stroke="#35c0d0" stroke-width="1.3"/><path d="M4 8 L1 10" stroke="#35c0d0" stroke-width="1.3"/><path d="M1 1 L4 4 M2 4 L4 1" stroke="#ddd"/></svg>
<svg style="position:absolute;left:297px;top:99px;" width="11" height="11" viewBox="0 0 11 11"><path d="M2 8 L8 1" stroke="#ddd" stroke-width="1.8"/><circle cx="2" cy="8" r="1.5" fill="#35c0d0"/></svg>
<svg style="position:absolute;left:317px;top:99px;" width="11" height="11" viewBox="0 0 11 11"><rect x="0.5" y="0.5" width="8" height="9" rx="1" fill="none" stroke="#bbb"/><path d="M3 1 v8 M6 1 v8" stroke="#bbb"/></svg>
<svg style="position:absolute;left:328px;top:99px;" width="11" height="11" viewBox="0 0 11 11"><rect x="0.5" y="0.5" width="10" height="9" rx="1" fill="none" stroke="#bbb"/><rect x="2" y="2.5" width="7" height="5" fill="none" stroke="#bbb"/></svg>
<svg style="position:absolute;left:341px;top:99px;" width="11" height="11" viewBox="0 0 11 11"><rect x="0.5" y="0.5" width="10" height="9" rx="1" fill="none" stroke="#bbb"/><circle cx="5.5" cy="5" r="2" fill="#35c0d0"/></svg>
<svg style="position:absolute;left:354px;top:99px;" width="11" height="11" viewBox="0 0 11 11"><rect x="0" y="0" width="10" height="10" fill="#4a4a4a"/><circle cx="5" cy="5" r="2.5" fill="none" stroke="#555"/></svg>
<svg style="position:absolute;left:366px;top:99px;" width="11" height="11" viewBox="0 0 11 11"><rect x="0.5" y="0.5" width="9" height="9" rx="1" fill="none" stroke="#bbb"/><path d="M5 1 v8 M1 5 h8" stroke="#35c0d0" stroke-width="1.5"/></svg>
<svg style="position:absolute;left:379px;top:99px;" width="11" height="11" viewBox="0 0 11 11"><rect x="0.5" y="0.5" width="10" height="9" rx="1" fill="none" stroke="#bbb"/><path d="M2 8 L5 4 L7 8Z" fill="#35c0d0"/><circle cx="7.5" cy="3.5" r="1.5" fill="#35c0d0"/></svg>
<svg style="position:absolute;left:392px;top:99px;" width="11" height="11" viewBox="0 0 11 11"><rect x="0.5" y="0.5" width="10" height="9" rx="1" fill="none" stroke="#bbb"/><path d="M3 2.5 h5 M5.5 2.5 v5" stroke="#35c0d0" stroke-width="1.5"/></svg>
<svg style="position:absolute;left:412px;top:99px;" width="11" height="11" viewBox="0 0 11 11"><circle cx="5" cy="5" r="4.5" fill="none" stroke="#bbb" stroke-width="1.2"/><path d="M5 5 L2 3 M5 5 L8 3 M5 5 V9" stroke="#bbb"/></svg>
<svg style="position:absolute;left:438px;top:99px;" width="11" height="11" viewBox="0 0 11 11"><circle cx="5" cy="5" r="4.5" fill="#ddd"/><path d="M5 0.5 a4.5 4.5 0 0 1 0 9Z" fill="#888"/></svg>
<svg style="position:absolute;left:450px;top:99px;" width="11" height="11" viewBox="0 0 11 11"><circle cx="5" cy="5" r="4.5" fill="none" stroke="#bbb" stroke-width="1.2"/><circle cx="5" cy="5" r="2.7" fill="#35c0d0"/></svg>
<svg style="position:absolute;left:475px;top:99px;" width="11" height="11" viewBox="0 0 11 11"><circle cx="5" cy="3.5" r="2.5" fill="#ddd"/><path d="M5 6 v3 M1 3.5 h1.5 M7.5 3.5 h1.5 M2 1 l1 1 M8 1 l-1 1" stroke="#ddd"/></svg>
<svg style="position:absolute;left:488px;top:99px;" width="11" height="11" viewBox="0 0 11 11"><circle cx="6" cy="4.5" r="3.5" fill="#35c0d0"/><circle cx="2" cy="7" r="1.5" fill="#aaa"/></svg>
<svg style="position:absolute;left:508px;top:99px;" width="11" height="11" viewBox="0 0 11 11"><circle cx="5" cy="4" r="3.8" fill="#ddd"/><path d="M1 7.5 L5 9.5 L9 7.5" stroke="#35c0d0" fill="none"/></svg>
<svg style="position:absolute;left:520px;top:99px;" width="11" height="11" viewBox="0 0 11 11"><circle cx="6" cy="3.5" r="3" fill="#ccc"/><path d="M1 8 L4 5" stroke="#888" stroke-width="2.5"/></svg>
<svg style="position:absolute;left:533px;top:99px;" width="11" height="11" viewBox="0 0 11 11"><path d="M4 1 a4 4 0 0 0 0 8" stroke="#35c0d0" stroke-width="1.4" fill="none"/><path d="M6 1 L9 5 L6 9" stroke="#ddd" stroke-width="1.2" fill="none"/></svg>
<svg style="position:absolute;left:566px;top:99px;" width="11" height="11" viewBox="0 0 11 11"><path d="M0.5 0.5 h2 M4 0.5 h2 M0.5 0.5 v2 M0.5 4 v2" stroke="#35c0d0"/><path d="M4 3 L4 10 L6 8.5 L7.5 10.5 L8.5 10 L7 7.5 L9.5 7.5Z" fill="#ddd"/></svg>
<svg style="position:absolute;left:586px;top:99px;" width="11" height="11" viewBox="0 0 11 11"><rect x="0.5" y="3.5" width="5" height="6" fill="#ddd"/><rect x="3.5" y="0.5" width="6" height="6" fill="none" stroke="#ddd"/></svg>
<svg style="position:absolute;left:598px;top:99px;" width="11" height="11" viewBox="0 0 11 11"><rect x="0.5" y="3.5" width="6" height="6" fill="#ddd"/><rect x="3.5" y="0.5" width="6" height="6" fill="none" stroke="#ddd"/></svg>
<svg style="position:absolute;left:611px;top:99px;" width="11" height="11" viewBox="0 0 11 11"><rect x="0.5" y="0.5" width="9" height="9" fill="none" stroke="#ddd"/><path d="M2.5 2.5 L7.5 7.5" stroke="#ddd" stroke-width="1.3"/></svg>
<svg style="position:absolute;left:632px;top:99px;" width="11" height="11" viewBox="0 0 11 11"><circle cx="5" cy="5" r="4.5" fill="#ddd"/><circle cx="5" cy="5" r="2" fill="#444"/><path d="M5 0 V3 M0.5 6 L3 5 M9.5 6 L7 5" stroke="#444"/></svg>
<div style="left:354px;top:98px;width:11px;height:12px;background:#4a4a4a;"></div>
<div style="left:423px;top:97px;width:13px;height:13px;background:#5285a6;"></div>
<svg style="position:absolute;left:424px;top:99px;" width="11" height="11" viewBox="0 0 11 11"><path d="M5.5 0.5 L10 3 V8 L5.5 10.5 L1 8 V3Z" fill="#35c0d0" stroke="#eee" stroke-width="0.8"/><path d="M1 3 L5.5 5.5 L10 3 M5.5 5.5 V10.5" stroke="#246" stroke-width="0.8" fill="none"/></svg>
<div style="left:461px;top:97px;width:13px;height:13px;background:#5285a6;"></div>
<div style="left:463px;top:99px;width:9px;height:9px;border-radius:50%;background:repeating-conic-gradient(#ddd 0 25%,#333 0 50%) 0 0/3px 3px;"></div>
<div style="left:545px;top:98px;width:12px;height:12px;background:#4a4a4a;"></div>
<div style="left:644px;top:99px;width:25px;height:9px;background:#2b2b2b;"></div>
<div class="t" style="left:647px;top:99.73px;font-size:8px;line-height:8px;color:#d8d8d8;transform:scaleX(1.028);transform-origin:0 0;">0.00</div>
<svg style="position:absolute;left:672px;top:99px;" width="9" height="10" viewBox="0 0 9 10"><path d="M3 1 H8 V9 H3 a4 4 0 0 1 0 -8Z" fill="#ddd"/><path d="M4 3 L2 5 L4 7Z" fill="#444"/></svg>
<div style="left:685px;top:99px;width:25px;height:9px;background:#2b2b2b;"></div>
<div class="t" style="left:688px;top:99.73px;font-size:8px;line-height:8px;color:#d8d8d8;transform:scaleX(1.028);transform-origin:0 0;">1.00</div>
<svg style="position:absolute;left:714px;top:99px;" width="10" height="10" viewBox="0 0 10 10"><circle cx="5" cy="5" r="4.3" fill="none" stroke="#555" stroke-width="1.2"/></svg>
<div style="left:726px;top:98px;width:108px;height:11px;background:#4c4c4c;"></div>
<div class="t" style="left:728.5px;top:99.30px;font-size:8.5px;line-height:8.5px;color:#6a6a6a;transform:scaleX(0.824);transform-origin:0 0;">sRGB gamma</div>
<svg style="position:absolute;left:825px;top:101px;" width="8" height="5" viewBox="0 0 8 5"><path d="M0.5 0.5 H7.5 L4 4.5Z" fill="#777"/></svg>
<div style="left:211px;top:111px;width:877px;height:518px;background:#5d5d5d;"></div>
<div style="left:1088px;top:111px;width:3px;height:518px;background:#3e3e3e;"></div>
<svg style="position:absolute;left:211px;top:111px;" width="877" height="518" viewBox="0 0 877 518"><g stroke="#000" stroke-width="2" stroke-linecap="round"><line x1="261.8" y1="167.9" x2="495.5" y2="169.6"/><line x1="277.8" y1="171.4" x2="455.6" y2="169.6"/><line x1="261.8" y1="167.9" x2="277.8" y2="171.4"/><line x1="261.8" y1="167.9" x2="266.4" y2="370.0"/><line x1="277.8" y1="171.4" x2="282.7" y2="395.3"/><line x1="455.6" y1="169.6" x2="455.6" y2="358.9"/><line x1="495.5" y1="169.6" x2="495.5" y2="381.4"/><line x1="266.4" y1="370.0" x2="455.6" y2="358.9"/><line x1="282.7" y1="395.3" x2="495.5" y2="381.4"/><line x1="266.4" y1="370.0" x2="282.7" y2="395.3"/><line x1="455.6" y1="358.9" x2="495.5" y2="381.4"/><line x1="504.8" y1="357.4" x2="737.3" y2="230.9"/><line x1="504.8" y1="357.4" x2="546.9" y2="378.7"/><line x1="546.9" y1="378.7" x2="802.8" y2="239.5"/><line x1="546.9" y1="378.7" x2="798.3" y2="358.3"/><line x1="737.3" y1="230.9" x2="802.8" y2="239.5"/><line x1="737.3" y1="230.9" x2="836.4" y2="227.9"/><line x1="802.8" y1="239.5" x2="815.6" y2="239.5"/><line x1="802.8" y1="239.5" x2="798.3" y2="358.3"/><line x1="815.6" y1="239.5" x2="810.5" y2="360.4"/><line x1="798.3" y1="358.3" x2="810.5" y2="360.4"/><line x1="815.6" y1="239.5" x2="877.0" y2="237.0"/><line x1="810.5" y1="360.4" x2="877.0" y2="356.8"/></g><g transform="translate(-211 -111)"><g fill="none" stroke="#179bec" stroke-linecap="round" stroke-linejoin="round"><ellipse cx="434" cy="336.5" rx="12" ry="23" stroke-width="2.6" transform="rotate(10 434 336.5)"/><path d="M425 365 C413 388 396 412 382 431" stroke-width="5"/><path d="M382 431 C352 458 322 480 286 501" stroke-width="3.8"/><path d="M286 501 L310 510" stroke-width="4"/><path d="M382 432 L417 436 C422 440 422 446 419 451 L390 493 L422 495" stroke-width="3.6"/><path d="M426 366 C433 376 440 390 452 396 C460 398 470 398 477 397" stroke-width="2.4"/><path d="M444 376 C455 375 466 374 476 374" stroke-width="2.2"/><path d="M474 353 C477 353 478 360 477 367 C476 372 475 375 479 379 C484 384 484 394 480 398 C475 400 471 396 471 388 C471 380 473 375 471 368 C469 360 471 353 474 353Z" stroke-width="2"/></g></g></svg>
<svg style="position:absolute;left:220px;top:594px;" width="24" height="22" viewBox="0 0 24 22"><path d="M8.6 9 V18" stroke="#22cc22" stroke-width="1.5"/><path d="M8.6 18 H17" stroke="#2222ee" stroke-width="1.5"/><path d="M6 6.5 L8.5 4 M6.5 3 L8.5 5 L7 8" stroke="#22cc22" stroke-width="1.2" fill="none"/><path d="M5 14 L7.5 13.5 L8 17 L5.5 17Z" fill="#e03030"/><path d="M17.5 14.5 h2.5 l-2.5 3 h2.5" stroke="#2222ee" stroke-width="1.2" fill="none"/></svg>
<div class="t" style="left:635.5px;top:618.23px;font-size:8px;line-height:8px;color:#eeeeee;font-weight:bold;transform:scaleX(0.872);transform-origin:0 0;">persp</div>
<div style="left:217px;top:130px;width:56px;height:232px;background:#3c3c3c;box-shadow:0 0 0 1px #474747;"></div>
<div style="left:218px;top:131px;width:55px;height:20px;background:#ffffff;"></div>
<svg style="position:absolute;left:224px;top:136px;" width="9" height="9" viewBox="0 0 9 9"><path d="M0.5 0.5 H3 L4.5 4 L6 0.5 H8.5 V8 H6.5 V4 L5 7 H4 L2.5 4 V8 H0.5Z" fill="#117c84"/><path d="M2.5 8 V5 L4 8Z" fill="#7cc"/></svg>
<svg style="position:absolute;left:257px;top:136px;" width="10" height="10" viewBox="0 0 10 10"><path d="M1 1 L9 9 M9 1 L1 9" stroke="#777" stroke-width="1"/></svg>
<div style="left:246px;top:153px;width:25px;height:25px;background:#5285a6;"></div>
<svg style="position:absolute;left:220px;top:153px;" width="26" height="26" viewBox="0 0 26 26"><path d="M6 19 L17 8 L20 11 L9 22 L5 23Z" fill="none" stroke="#dddddd" stroke-width="1.6"/><path d="M15 10 L18 13" stroke="#dddddd"/><path d="M5 23 L6 19 L9 22Z" fill="#dddddd"/></svg>
<svg style="position:absolute;left:246px;top:153px;" width="25" height="25" viewBox="0 0 25 25"><path d="M9 16 L20 5" stroke="#eee" stroke-width="2.5" stroke-linecap="round"/><path d="M10 14 L12 16 L7 20 L5 20Z" fill="#eee"/></svg>
<svg style="position:absolute;left:220px;top:179px;" width="26" height="26" viewBox="0 0 26 26"><path d="M4 16 L13 7 a2 2 0 0 1 3 0 L19 10 a2 2 0 0 1 0 3 L11 21 H8Z" fill="none" stroke="#dddddd" stroke-width="1.5"/><path d="M13 7 L19 13 L14 18 L9 12Z" fill="#dddddd"/><path d="M8 21 H18" stroke="#dddddd"/></svg>
<svg style="position:absolute;left:246px;top:179px;" width="25" height="26" viewBox="0 0 25 26"><path d="M6 7 V5 H19 V7 M12.5 5 V20 M9 20 H16" fill="none" stroke="#dddddd" stroke-width="1.6"/></svg>
<svg style="position:absolute;left:220px;top:205px;" width="26" height="26" viewBox="0 0 26 26"><path d="M8 19 L18 7" stroke="#dddddd" stroke-width="1.6" stroke-linecap="round"/></svg>
<svg style="position:absolute;left:246px;top:205px;" width="25" height="26" viewBox="0 0 25 26"><path d="M6 20 L19 7 M11 7 H19 V15" fill="none" stroke="#dddddd" stroke-width="1.6"/></svg>
<svg style="position:absolute;left:220px;top:232px;" width="26" height="26" viewBox="0 0 26 26"><circle cx="12.5" cy="13" r="6.5" fill="none" stroke="#dddddd" stroke-width="1.6"/></svg>
<svg style="position:absolute;left:246px;top:232px;" width="25" height="26" viewBox="0 0 25 26"><rect x="6" y="6.5" width="13" height="13" rx="1.5" fill="none" stroke="#dddddd" stroke-width="1.6"/></svg>
<div style="left:220px;top:260px;width:51px;height:19px;background:#0fa2f4;"></div>
<div style="left:237px;top:285px;width:16px;height:1px;background:repeating-linear-gradient(90deg,#9ab 0 1px,transparent 1px 2px);"></div>
<svg style="position:absolute;left:220px;top:292px;" width="51" height="22" viewBox="0 0 51 22"><rect x="2.5" y="1.5" width="12" height="12" rx="1" fill="none" stroke="#ccc" stroke-width="1.2"/><rect x="8.5" y="7.5" width="12" height="12" rx="1" fill="#3c3c3c" stroke="#ccc" stroke-width="1.2"/><rect x="35.5" y="1.5" width="12" height="12" rx="1" fill="none" stroke="#ccc" stroke-width="1.2"/><rect x="29.5" y="7.5" width="12" height="12" rx="1" fill="#3c3c3c" stroke="#ccc" stroke-width="1.2"/></svg>
<div style="left:237px;top:322px;width:16px;height:1px;background:repeating-linear-gradient(90deg,#9ab 0 1px,transparent 1px 2px);"></div>
<svg style="position:absolute;left:220px;top:328px;" width="51" height="32" viewBox="0 0 51 32"><g fill="none" stroke="#aaa" stroke-width="1"><rect x="1.5" y="1.5" width="11" height="11"/><path d="M7 1.5 v11 M1.5 7 h11"/><rect x="19.5" y="1.5" width="11" height="11"/><path d="M25 4 v7 M21.5 7.5 h7"/><rect x="37.5" y="1.5" width="11" height="11"/><path d="M40 7 h6"/></g><g fill="none" stroke="#bbb" stroke-width="1.1"><path d="M3 17 L10 28 M10 17 L3 28"/><circle cx="3.5" cy="28" r="1.8"/><circle cx="9.5" cy="28" r="1.8"/><rect x="20.5" y="17.5" width="6" height="8"/><rect x="23.5" y="20.5" width="6" height="8" fill="#3c3c3c"/><rect x="38.5" y="18.5" width="8" height="10"/><rect x="40.5" y="16.5" width="4" height="3" fill="#3c3c3c"/></g></svg>
<div style="left:930px;top:121px;width:133px;height:185px;background:#444444;box-shadow:0 0 0 1px #4a4a4a,0 0 2px 1px #505050;"></div>
<div style="left:930px;top:121px;width:133px;height:21px;background:#ffffff;"></div>
<svg style="position:absolute;left:936px;top:127px;" width="10" height="10" viewBox="0 0 10 10"><path d="M0.5 0.5 H3 L4.5 4 L6 0.5 H8.5 V8 H6.5 V4 L5 7 H4 L2.5 4 V8 H0.5Z" fill="#117c84"/><path d="M2.5 8 V5 L4 8Z" fill="#7cc"/></svg>
<div class="t" style="left:949px;top:127.80px;font-size:8.5px;line-height:8.5px;color:#777777;transform:scaleX(0.910);transform-origin:0 0;">Layer Manager</div>
<svg style="position:absolute;left:1048px;top:126px;" width="10" height="10" viewBox="0 0 10 10"><path d="M1 1 L9 9 M9 1 L1 9" stroke="#777" stroke-width="1"/></svg>
<svg style="position:absolute;left:1047px;top:146px;" width="12" height="10" viewBox="0 0 12 10"><path d="M2 5 a4 4 0 0 1 7 -2.5 M10 5 a4 4 0 0 1 -7 2.5" stroke="#5c5" stroke-width="1.6" fill="none"/><path d="M7 0.5 L10.5 2 L8.5 4.5Z M5 9.5 L1.5 8 L3.5 5.5Z" fill="#5c5"/></svg>
<div style="left:931px;top:159px;width:131px;height:130px;background:#2b2b2b;border-radius:2px;"></div>
<div class="t" style="left:933px;top:163.80px;font-size:8.5px;line-height:8.5px;color:#dddddd;transform:scaleX(0.894);transform-origin:0 0;">persp</div>
<div style="left:933px;top:174px;width:128px;height:14px;background:#5285a6;"></div>
<div style="left:935px;top:175px;width:13px;height:12px;background:transparent;border:1px solid #5f90b0;box-sizing:border-box;"></div>
<div style="left:952px;top:175px;width:13px;height:12px;background:transparent;border:1px solid #5f90b0;box-sizing:border-box;"></div>
<div class="t" style="left:938.5px;top:176.96px;font-size:9.5px;line-height:9.5px;color:#eeeeee;transform:scaleX(1.026);transform-origin:0 0;">V</div>
<div class="t" style="left:969px;top:177.60px;font-size:8.5px;line-height:8.5px;color:#eeeeee;transform:scaleX(0.888);transform-origin:0 0;">Thumbnails</div>
<div style="left:935px;top:190px;width:13px;height:12px;background:transparent;border:1px solid #444;box-sizing:border-box;"></div>
<div style="left:952px;top:190px;width:13px;height:12px;background:transparent;border:1px solid #444;box-sizing:border-box;"></div>
<div class="t" style="left:969px;top:192.60px;font-size:8.5px;line-height:8.5px;color:#cfcfcf;transform:scaleX(0.821);transform-origin:0 0;">First Pass</div>
<div style="left:935px;top:205px;width:13px;height:12px;background:transparent;border:1px solid #444;box-sizing:border-box;"></div>
<div style="left:952px;top:205px;width:13px;height:12px;background:transparent;border:1px solid #444;box-sizing:border-box;"></div>
<div class="t" style="left:938.5px;top:206.96px;font-size:9.5px;line-height:9.5px;color:#eeeeee;transform:scaleX(1.026);transform-origin:0 0;">V</div>
<div class="t" style="left:955.5px;top:206.96px;font-size:9.5px;line-height:9.5px;color:#dddddd;transform:scaleX(0.947);transform-origin:0 0;">S</div>
<div class="t" style="left:969px;top:207.60px;font-size:8.5px;line-height:8.5px;color:#cfcfcf;transform:scaleX(0.888);transform-origin:0 0;">Box</div>
<div style="left:935px;top:220px;width:13px;height:12px;background:transparent;border:1px solid #444;box-sizing:border-box;"></div>
<div style="left:952px;top:220px;width:13px;height:12px;background:transparent;border:1px solid #444;box-sizing:border-box;"></div>
<div class="t" style="left:938.5px;top:221.96px;font-size:9.5px;line-height:9.5px;color:#eeeeee;transform:scaleX(1.026);transform-origin:0 0;">V</div>
<div class="t" style="left:955.5px;top:221.96px;font-size:9.5px;line-height:9.5px;color:#dddddd;transform:scaleX(0.947);transform-origin:0 0;">S</div>
<div class="t" style="left:969px;top:222.60px;font-size:8.5px;line-height:8.5px;color:#cfcfcf;transform:scaleX(0.750);transform-origin:0 0;">Ramp</div>
<svg style="position:absolute;left:934px;top:291px;" width="30" height="11" viewBox="0 0 30 11"><path d="M1 5 L7 2 L8 8Z" fill="#ccc"/><path d="M10 2 v6 M8 4 l2 -2 l2 2" stroke="#5bd" stroke-width="1.3" fill="none"/><path d="M15 5 L21 2 L22 8Z" fill="#ccc"/><path d="M24 2 v6 M22 6 l2 2 l2 -2" stroke="#5bd" stroke-width="1.3" fill="none"/></svg>
<svg style="position:absolute;left:1031px;top:290px;" width="30" height="14" viewBox="0 0 30 14"><path d="M2 8 L9 4 L10 10Z" fill="#ccc"/><path d="M11 2 v5 M8.5 4.5 h5" stroke="#5bd" stroke-width="1.3"/><rect x="19" y="3" width="7" height="10" rx="1" fill="#aaa"/><rect x="18" y="2" width="9" height="2" fill="#ddd"/></svg>
<div style="left:1092px;top:82px;width:171px;height:549px;background:#444444;"></div>
<svg style="position:absolute;left:1229px;top:84px;" width="11" height="11" viewBox="0 0 11 11"><path d="M5.5 1 L10 9 H1Z" fill="none" stroke="#888" stroke-width="1"/><circle cx="5.5" cy="1.5" r="1.5" fill="#5c5"/><circle cx="1.5" cy="9" r="1.5" fill="#e44"/><circle cx="9.5" cy="9" r="1.5" fill="#48f"/></svg>
<svg style="position:absolute;left:1241px;top:84px;" width="11" height="11" viewBox="0 0 11 11"><circle cx="5.5" cy="6" r="4.5" fill="#3bc"/><circle cx="5.5" cy="6" r="2" fill="#444"/><path d="M1 6 h9" stroke="#444" stroke-width="1.5"/></svg>
<svg style="position:absolute;left:1254px;top:84px;" width="10" height="11" viewBox="0 0 10 11"><path d="M1 10 L9 2 M5 2 H9 V6" stroke="#3bc" stroke-width="1.3" fill="none"/><path d="M1 1 V10 H10" stroke="#888" fill="none"/></svg>
<div class="t" style="left:1100px;top:100.80px;font-size:8.5px;line-height:8.5px;color:#d6d6d6;transform:scaleX(0.919);transform-origin:0 0;">Channels</div>
<div class="t" style="left:1142px;top:100.80px;font-size:8.5px;line-height:8.5px;color:#d6d6d6;transform:scaleX(0.888);transform-origin:0 0;">Edit</div>
<div class="t" style="left:1165.5px;top:100.80px;font-size:8.5px;line-height:8.5px;color:#d6d6d6;transform:scaleX(0.936);transform-origin:0 0;">Object</div>
<div class="t" style="left:1197.5px;top:100.80px;font-size:8.5px;line-height:8.5px;color:#d6d6d6;transform:scaleX(0.941);transform-origin:0 0;">Show</div>
<div style="left:1095px;top:112px;width:171px;height:355px;background:#2b2b2b;"></div>
<div style="left:1150px;top:469px;width:55px;height:1px;background:repeating-linear-gradient(90deg,#666 0 1px,transparent 1px 2px);"></div>
<div style="left:1095px;top:475px;width:171px;height:155px;background:#444444;border:1px solid #4c4c4c;box-sizing:border-box;"></div>
<div style="left:1096px;top:476px;width:169px;height:12px;background:#3a3a3a;"></div>
<div style="left:1135px;top:476px;width:30px;height:12px;background:#444444;"></div>
<div class="t" style="left:1102.5px;top:479.30px;font-size:8.5px;line-height:8.5px;color:#999999;transform:scaleX(0.897);transform-origin:0 0;">Display</div>
<div class="t" style="left:1143px;top:479.30px;font-size:8.5px;line-height:8.5px;color:#eeeeee;transform:scaleX(0.929);transform-origin:0 0;">Anim</div>
<div class="t" style="left:1102px;top:490.80px;font-size:8.5px;line-height:8.5px;color:#d6d6d6;transform:scaleX(0.823);transform-origin:0 0;">Layers</div>
<div class="t" style="left:1132.5px;top:490.80px;font-size:8.5px;line-height:8.5px;color:#d6d6d6;transform:scaleX(0.922);transform-origin:0 0;">Options</div>
<div class="t" style="left:1170.5px;top:490.80px;font-size:8.5px;line-height:8.5px;color:#d6d6d6;transform:scaleX(0.894);transform-origin:0 0;">Show</div>
<div class="t" style="left:1200px;top:490.80px;font-size:8.5px;line-height:8.5px;color:#d6d6d6;transform:scaleX(0.915);transform-origin:0 0;">Help</div>
<svg style="position:absolute;left:1099px;top:502px;" width="40" height="12" viewBox="0 0 40 12"><text x="1" y="10" font-size="9" fill="#e07030" font-family="Liberation Sans">0</text><path d="M8 3 h4 M10 1 v4" stroke="#e07030" stroke-width="0.8"/><text x="16" y="10" font-size="9" fill="#e07030" font-family="Liberation Sans">0</text><path d="M23 3 h4 M25 1 v4" stroke="#e07030" stroke-width="0.8"/><path d="M21 8 l3 1.5 l-3 1.5Z" fill="#ddd"/><text x="32" y="10" font-size="9" fill="#e07030" font-family="Liberation Sans">1</text><path d="M37 3 h3 M38.5 1 v4" stroke="#e07030" stroke-width="0.8"/><path d="M35 8 h4 v3 h-4Z" fill="#ddd"/></svg>
<svg style="position:absolute;left:1200px;top:503px;" width="62" height="10" viewBox="0 0 62 10"><path d="M2 5 L8 2 L9 8Z" fill="#ccc"/><path d="M11 2 v6" stroke="#5bd" stroke-width="1.3"/><path d="M16 5 L22 2 L23 8Z" fill="#ccc"/><path d="M25 2 v6" stroke="#5bd" stroke-width="1.3"/><path d="M34 5 L40 2 L41 8Z" fill="#ccc"/><path d="M42 1 v4 M40 3 h4" stroke="#5bd" stroke-width="1.2"/><path d="M51 5 L57 2 L58 8Z" fill="#ccc"/><circle cx="58" cy="3" r="1.8" fill="#5bd"/></svg>
<div style="left:1098px;top:519px;width:164px;height:93px;background:#2b2b2b;"></div>
<div class="t" style="left:1098px;top:617.30px;font-size:8.5px;line-height:8.5px;color:#8a8a8a;transform:scaleX(0.932);transform-origin:0 0;">Weight</div>
<div style="left:1126px;top:614px;width:24px;height:12px;background:#404040;"></div>
<div class="t" style="left:1129px;top:616.30px;font-size:8.5px;line-height:8.5px;color:#6a6a6a;transform:scaleX(0.846);transform-origin:0 0;">1.000</div>
<div style="left:1155px;top:620px;width:92px;height:1px;background:#363636;"></div>
<div style="left:1247px;top:616px;width:5px;height:9px;background:#888;border-radius:1px;"></div>
<div style="left:1253px;top:612px;width:10px;height:13px;background:#3e3e3e;"></div>
<div class="t" style="left:1256px;top:615.07px;font-size:7px;line-height:7px;color:#999999;">K</div>
<div style="left:1266px;top:82px;width:14px;height:549px;background:#444444;"></div>
<div style="left:1278px;top:82px;width:1px;height:549px;background:#333;"></div>
<div style="left:1268px;top:83px;width:10px;height:102px;background:#484848;"></div>
<div class="t" style="left:1278px;top:91px;font-size:8.5px;line-height:8.5px;color:#e8e8e8;transform:rotate(90deg) scaleX(0.876);transform-origin:0 0;">Channel Box / Layer Editor</div>
<div style="left:1268px;top:188px;width:10px;height:72px;background:#454545;"></div>
<div class="t" style="left:1278px;top:197px;font-size:8.5px;line-height:8.5px;color:#a0a0a0;transform:rotate(90deg) scaleX(0.938);transform-origin:0 0;">Modeling Toolkit</div>
<div style="left:1268px;top:264px;width:10px;height:66px;background:#454545;"></div>
<div class="t" style="left:1278px;top:270px;font-size:8.5px;line-height:8.5px;color:#a0a0a0;transform:rotate(90deg) scaleX(0.978);transform-origin:0 0;">Attribute Editor</div>
<div style="left:0px;top:631px;width:1280px;height:89px;background:#444444;"></div>
<div style="left:0px;top:631px;width:1280px;height:3px;background:#3a3a3a;"></div>
<div style="left:2px;top:636px;width:4px;height:20px;background:repeating-conic-gradient(#585858 0 25%,#444 0 50%) 0 0/2px 2px;"></div>
<div style="left:10px;top:636px;width:1072px;height:19px;background:#2b2b2b;"></div>
<svg style="position:absolute;left:10px;top:636px;" width="1072" height="19" viewBox="0 0 1072 19"><rect x="16.0" y="8" width="1" height="11" fill="#9a9a9a"/><text x="18.5" y="6.5" font-size="8.5" fill="#8a8a8a" font-family="Liberation Sans">2</text><rect x="39.6" y="8" width="1" height="11" fill="#9a9a9a"/><text x="42.1" y="6.5" font-size="8.5" fill="#8a8a8a" font-family="Liberation Sans">4</text><rect x="63.3" y="8" width="1" height="11" fill="#9a9a9a"/><text x="65.8" y="6.5" font-size="8.5" fill="#8a8a8a" font-family="Liberation Sans">6</text><rect x="86.9" y="8" width="1" height="11" fill="#9a9a9a"/><text x="89.4" y="6.5" font-size="8.5" fill="#8a8a8a" font-family="Liberation Sans">8</text><rect x="110.6" y="8" width="1" height="11" fill="#9a9a9a"/><text x="113.1" y="6.5" font-size="8.5" fill="#8a8a8a" font-family="Liberation Sans">10</text><rect x="134.2" y="8" width="1" height="11" fill="#9a9a9a"/><text x="136.7" y="6.5" font-size="8.5" fill="#8a8a8a" font-family="Liberation Sans">12</text><rect x="157.8" y="8" width="1" height="11" fill="#9a9a9a"/><text x="160.3" y="6.5" font-size="8.5" fill="#8a8a8a" font-family="Liberation Sans">14</text><rect x="181.5" y="8" width="1" height="11" fill="#9a9a9a"/><text x="184.0" y="6.5" font-size="8.5" fill="#8a8a8a" font-family="Liberation Sans">16</text><rect x="205.1" y="8" width="1" height="11" fill="#9a9a9a"/><text x="207.6" y="6.5" font-size="8.5" fill="#8a8a8a" font-family="Liberation Sans">18</text><rect x="228.8" y="8" width="1" height="11" fill="#9a9a9a"/><text x="231.3" y="6.5" font-size="8.5" fill="#8a8a8a" font-family="Liberation Sans">20</text><rect x="252.4" y="8" width="1" height="11" fill="#9a9a9a"/><text x="254.9" y="6.5" font-size="8.5" fill="#8a8a8a" font-family="Liberation Sans">22</text><rect x="276.0" y="8" width="1" height="11" fill="#9a9a9a"/><text x="278.5" y="6.5" font-size="8.5" fill="#8a8a8a" font-family="Liberation Sans">24</text><rect x="299.7" y="8" width="1" height="11" fill="#9a9a9a"/><text x="302.2" y="6.5" font-size="8.5" fill="#8a8a8a" font-family="Liberation Sans">26</text><rect x="323.3" y="8" width="1" height="11" fill="#9a9a9a"/><text x="325.8" y="6.5" font-size="8.5" fill="#8a8a8a" font-family="Liberation Sans">28</text><rect x="347.0" y="8" width="1" height="11" fill="#9a9a9a"/><text x="349.5" y="6.5" font-size="8.5" fill="#8a8a8a" font-family="Liberation Sans">30</text><rect x="370.6" y="8" width="1" height="11" fill="#9a9a9a"/><text x="373.1" y="6.5" font-size="8.5" fill="#8a8a8a" font-family="Liberation Sans">32</text><rect x="394.2" y="8" width="1" height="11" fill="#9a9a9a"/><text x="396.7" y="6.5" font-size="8.5" fill="#8a8a8a" font-family="Liberation Sans">34</text><rect x="417.9" y="8" width="1" height="11" fill="#9a9a9a"/><text x="420.4" y="6.5" font-size="8.5" fill="#8a8a8a" font-family="Liberation Sans">36</text><rect x="441.5" y="8" width="1" height="11" fill="#9a9a9a"/><text x="444.0" y="6.5" font-size="8.5" fill="#8a8a8a" font-family="Liberation Sans">38</text><rect x="465.2" y="8" width="1" height="11" fill="#9a9a9a"/><text x="467.7" y="6.5" font-size="8.5" fill="#8a8a8a" font-family="Liberation Sans">40</text><rect x="488.8" y="8" width="1" height="11" fill="#9a9a9a"/><text x="491.3" y="6.5" font-size="8.5" fill="#8a8a8a" font-family="Liberation Sans">42</text><rect x="512.4" y="8" width="1" height="11" fill="#9a9a9a"/><text x="514.9" y="6.5" font-size="8.5" fill="#8a8a8a" font-family="Liberation Sans">44</text><rect x="536.1" y="8" width="1" height="11" fill="#9a9a9a"/><text x="538.6" y="6.5" font-size="8.5" fill="#8a8a8a" font-family="Liberation Sans">46</text><rect x="559.7" y="8" width="1" height="11" fill="#9a9a9a"/><text x="562.2" y="6.5" font-size="8.5" fill="#8a8a8a" font-family="Liberation Sans">48</text><rect x="583.4" y="8" width="1" height="11" fill="#9a9a9a"/><text x="585.9" y="6.5" font-size="8.5" fill="#8a8a8a" font-family="Liberation Sans">50</text><rect x="607.0" y="8" width="1" height="11" fill="#9a9a9a"/><text x="609.5" y="6.5" font-size="8.5" fill="#8a8a8a" font-family="Liberation Sans">52</text><rect x="630.6" y="8" width="1" height="11" fill="#9a9a9a"/><text x="633.1" y="6.5" font-size="8.5" fill="#8a8a8a" font-family="Liberation Sans">54</text><rect x="654.3" y="8" width="1" height="11" fill="#9a9a9a"/><text x="656.8" y="6.5" font-size="8.5" fill="#8a8a8a" font-family="Liberation Sans">56</text><rect x="677.9" y="8" width="1" height="11" fill="#9a9a9a"/><text x="680.4" y="6.5" font-size="8.5" fill="#8a8a8a" font-family="Liberation Sans">58</text><rect x="701.6" y="8" width="1" height="11" fill="#9a9a9a"/><text x="704.1" y="6.5" font-size="8.5" fill="#8a8a8a" font-family="Liberation Sans">60</text><rect x="725.2" y="8" width="1" height="11" fill="#9a9a9a"/><text x="727.7" y="6.5" font-size="8.5" fill="#8a8a8a" font-family="Liberation Sans">62</text><rect x="748.8" y="8" width="1" height="11" fill="#9a9a9a"/><text x="751.3" y="6.5" font-size="8.5" fill="#8a8a8a" font-family="Liberation Sans">64</text><rect x="772.5" y="8" width="1" height="11" fill="#9a9a9a"/><text x="775.0" y="6.5" font-size="8.5" fill="#8a8a8a" font-family="Liberation Sans">66</text><rect x="796.1" y="8" width="1" height="11" fill="#9a9a9a"/><text x="798.6" y="6.5" font-size="8.5" fill="#8a8a8a" font-family="Liberation Sans">68</text><rect x="819.8" y="8" width="1" height="11" fill="#9a9a9a"/><text x="822.3" y="6.5" font-size="8.5" fill="#8a8a8a" font-family="Liberation Sans">70</text><rect x="843.4" y="8" width="1" height="11" fill="#9a9a9a"/><text x="845.9" y="6.5" font-size="8.5" fill="#8a8a8a" font-family="Liberation Sans">72</text><rect x="867.0" y="8" width="1" height="11" fill="#9a9a9a"/><text x="869.5" y="6.5" font-size="8.5" fill="#8a8a8a" font-family="Liberation Sans">74</text><rect x="890.7" y="8" width="1" height="11" fill="#9a9a9a"/><text x="893.2" y="6.5" font-size="8.5" fill="#8a8a8a" font-family="Liberation Sans">76</text><rect x="914.3" y="8" width="1" height="11" fill="#9a9a9a"/><text x="916.8" y="6.5" font-size="8.5" fill="#8a8a8a" font-family="Liberation Sans">78</text><rect x="938.0" y="8" width="1" height="11" fill="#9a9a9a"/><text x="940.5" y="6.5" font-size="8.5" fill="#8a8a8a" font-family="Liberation Sans">80</text><rect x="961.6" y="8" width="1" height="11" fill="#9a9a9a"/><text x="964.1" y="6.5" font-size="8.5" fill="#8a8a8a" font-family="Liberation Sans">82</text><rect x="985.2" y="8" width="1" height="11" fill="#9a9a9a"/><text x="987.7" y="6.5" font-size="8.5" fill="#8a8a8a" font-family="Liberation Sans">84</text><rect x="1008.9" y="8" width="1" height="11" fill="#9a9a9a"/><text x="1011.4" y="6.5" font-size="8.5" fill="#8a8a8a" font-family="Liberation Sans">86</text><rect x="1032.5" y="8" width="1" height="11" fill="#9a9a9a"/><text x="1035.0" y="6.5" font-size="8.5" fill="#8a8a8a" font-family="Liberation Sans">88</text><rect x="1056.2" y="8" width="1" height="11" fill="#9a9a9a"/><text x="1058.7" y="6.5" font-size="8.5" fill="#8a8a8a" font-family="Liberation Sans">90</text><rect x="4.7" y="13.5" width="11.8" height="5.5" fill="#47576a" stroke="#9cc" stroke-width="1"/><rect x="146.5" y="13.5" width="11.8" height="5.5" fill="#47576a" stroke="#9cc" stroke-width="1"/><rect x="347.5" y="13.5" width="11.8" height="5.5" fill="#47576a" stroke="#9cc" stroke-width="1"/><rect x="465.7" y="13.5" width="11.8" height="5.5" fill="#47576a" stroke="#9cc" stroke-width="1"/><rect x="548.4" y="13.5" width="11.8" height="5.5" fill="#47576a" stroke="#9cc" stroke-width="1"/><rect x="643.0" y="13.5" width="11.8" height="5.5" fill="#47576a" stroke="#9cc" stroke-width="1"/><rect x="725.7" y="13.5" width="11.8" height="5.5" fill="#47576a" stroke="#9cc" stroke-width="1"/><rect x="820.3" y="13.5" width="11.8" height="5.5" fill="#47576a" stroke="#9cc" stroke-width="1"/><rect x="891.2" y="13.5" width="11.8" height="5.5" fill="#47576a" stroke="#9cc" stroke-width="1"/><rect x="950.3" y="13.5" width="11.8" height="5.5" fill="#47576a" stroke="#9cc" stroke-width="1"/><rect x="985.7" y="13.5" width="11.8" height="5.5" fill="#47576a" stroke="#9cc" stroke-width="1"/></svg>
<div style="left:204px;top:636px;width:12px;height:19px;background:#5a5a5a;"></div>
<div class="t" style="left:205px;top:645.73px;font-size:8px;line-height:8px;color:#ffffff;font-weight:bold;transform:scaleX(1.124);transform-origin:0 0;">17</div>
<div style="left:1087px;top:640px;width:58px;height:12px;background:#3a3a3a;"></div>
<div class="t" style="left:1093px;top:643.23px;font-size:8px;line-height:8px;color:#666666;">1</div>
<svg style="position:absolute;left:1150px;top:639px;" width="126" height="15" viewBox="0 0 126 15"><g fill="#dddddd"><rect x="2" y="2" width="1.5" height="10"/><path d="M9 2 L4 7 L9 12Z M14 2 L9 7 L14 12Z"/><rect x="18" y="2" width="1.5" height="10"/><path d="M27 2 L20 7 L27 12Z"/><path d="M43 2 L36 7 L43 12Z"/><path d="M58 1 L49 7 L58 13Z"/><path d="M79 2 L86 7 L79 12Z"/><path d="M95 2 L102 7 L95 12Z"/><rect x="103" y="2" width="1.5" height="10"/><path d="M109 2 L114 7 L109 12Z M114 2 L119 7 L114 12Z"/><rect x="120" y="2" width="1.5" height="10"/></g><rect x="34" y="1" width="2" height="12" fill="#e07a30"/><rect x="87" y="1" width="2" height="12" fill="#e07a30"/><rect x="64" y="2" width="10" height="10" fill="#d9343a"/></svg>
<div style="left:2px;top:660px;width:4px;height:18px;background:repeating-conic-gradient(#585858 0 25%,#444 0 50%) 0 0/2px 2px;"></div>
<div style="left:10px;top:661px;width:58px;height:16px;background:#2b2b2b;border-radius:1px;"></div>
<div class="t" style="left:14px;top:665.30px;font-size:8.5px;line-height:8.5px;color:#dddddd;">1</div>
<div style="left:74px;top:661px;width:58px;height:16px;background:#2b2b2b;border-radius:1px;"></div>
<div class="t" style="left:78px;top:665.30px;font-size:8.5px;line-height:8.5px;color:#dddddd;">1</div>
<div style="left:141px;top:662px;width:253px;height:14px;background:#5a5a5a;border-radius:3px;"></div>
<div style="left:144px;top:663px;width:9px;height:11px;background:#9a9a9a;border-radius:2px;"></div>
<div class="t" style="left:157px;top:665.30px;font-size:8.5px;line-height:8.5px;color:#dddddd;">1</div>
<div class="t" style="left:370px;top:665.30px;font-size:8.5px;line-height:8.5px;color:#dddddd;transform:scaleX(0.952);transform-origin:0 0;">90</div>
<div style="left:385px;top:663px;width:8px;height:11px;background:#9a9a9a;border-radius:2px;"></div>
<div style="left:822px;top:661px;width:58px;height:16px;background:#2b2b2b;border-radius:1px;"></div>
<div class="t" style="left:826px;top:665.30px;font-size:8.5px;line-height:8.5px;color:#dddddd;transform:scaleX(0.952);transform-origin:0 0;">90</div>
<div style="left:886px;top:661px;width:58px;height:16px;background:#2b2b2b;border-radius:1px;"></div>
<div class="t" style="left:889px;top:665.30px;font-size:8.5px;line-height:8.5px;color:#dddddd;transform:scaleX(0.917);transform-origin:0 0;">250</div>
<div style="left:947px;top:663px;width:3px;height:12px;background:linear-gradient(90deg,#383838 0 0.5px,#808080 0.5px 2.5px,#383838 2.5px);border-radius:1px;"></div>
<svg style="position:absolute;left:957px;top:666px;" width="8" height="5" viewBox="0 0 8 5"><path d="M0.5 0.5 H7.5 L4 4.5Z" fill="none" stroke="#999"/></svg>
<div style="left:969px;top:662px;width:67px;height:15px;background:#464646;border:1px solid #4e4e4e;box-sizing:border-box;"></div>
<div class="t" style="left:972.5px;top:665.30px;font-size:8.5px;line-height:8.5px;color:#d8d8d8;transform:scaleX(0.883);transform-origin:0 0;">No Character Set</div>
<svg style="position:absolute;left:1043px;top:666px;" width="8" height="5" viewBox="0 0 8 5"><path d="M0.5 0.5 H7.5 L4 4.5Z" fill="none" stroke="#999"/></svg>
<div style="left:1055px;top:662px;width:67px;height:15px;background:#464646;border:1px solid #4e4e4e;box-sizing:border-box;"></div>
<div class="t" style="left:1058.5px;top:665.30px;font-size:8.5px;line-height:8.5px;color:#d8d8d8;transform:scaleX(0.879);transform-origin:0 0;">No Anim Layer</div>
<div style="left:1129px;top:663px;width:3px;height:12px;background:linear-gradient(90deg,#383838 0 0.5px,#808080 0.5px 2.5px,#383838 2.5px);border-radius:1px;"></div>
<div style="left:1138px;top:662px;width:64px;height:14px;background:#555555;border-radius:2px;"></div>
<div style="left:1189px;top:662px;width:13px;height:14px;background:#5a5a5a;"></div>
<svg style="position:absolute;left:1191px;top:667px;" width="9" height="5" viewBox="0 0 9 5"><path d="M0.5 0.5 H8.5 L4.5 4.5Z" fill="#ddd"/></svg>
<div class="t" style="left:1141px;top:665.30px;font-size:8.5px;line-height:8.5px;color:#d8d8d8;transform:scaleX(0.907);transform-origin:0 0;">24 fps</div>
<svg style="position:absolute;left:1210px;top:663px;" width="16" height="13" viewBox="0 0 16 13"><path d="M3 5 a3 3 0 0 1 3 -3 H13 M13 8 a3 3 0 0 1 -3 3 H3" stroke="#ddd" stroke-width="1.6" fill="none"/><path d="M11 0 L14 2 L11 4Z M5 9 L2 11 L5 13Z" fill="#ddd"/></svg>
<div style="left:1230px;top:663px;width:3px;height:12px;background:linear-gradient(90deg,#383838 0 0.5px,#808080 0.5px 2.5px,#383838 2.5px);border-radius:1px;"></div>
<svg style="position:absolute;left:1238px;top:663px;" width="14" height="14" viewBox="0 0 14 14"><circle cx="7" cy="7" r="5.5" fill="none" stroke="#ccc" stroke-width="1.3" stroke-dasharray="6 2"/><rect x="6" y="3" width="2" height="7" fill="#e07a30"/></svg>
<svg style="position:absolute;left:1256px;top:662px;" width="16" height="15" viewBox="0 0 16 15"><circle cx="4" cy="3" r="2.2" fill="none" stroke="#ccc"/><circle cx="11" cy="4" r="1.6" fill="#e07a30"/><path d="M10 6 L7 10 L4 12 M9 8 L13 9 M8 9 L11 14 M9 6 L6 6" stroke="#e07a30" stroke-width="1.5" fill="none"/></svg>
<div style="left:0px;top:681px;width:1280px;height:2px;background:#3c3c3c;"></div>
<div style="left:2px;top:684px;width:4px;height:17px;background:repeating-conic-gradient(#585858 0 25%,#444 0 50%) 0 0/2px 2px;"></div>
<div class="t" style="left:17px;top:689.23px;font-size:8px;line-height:8px;color:#e8e8e8;font-weight:bold;transform:scaleX(0.829);transform-origin:0 0;">MEL</div>
<div style="left:40px;top:685px;width:442px;height:15px;background:#2b2b2b;"></div>
<div style="left:484px;top:687px;width:1px;height:11px;background:repeating-linear-gradient(#777 0 1px,transparent 1px 2px);"></div>
<div style="left:487px;top:685px;width:770px;height:15px;background:#2b2b2b;"></div>
<div class="t" style="left:491px;top:688.80px;font-size:8.5px;line-height:8.5px;color:#d8d8d8;transform:scaleX(0.873);transform-origin:0 0;">Press the ESC key to stop playback.</div>
<svg style="position:absolute;left:1261px;top:686px;" width="14" height="13" viewBox="0 0 14 13"><rect x="0.5" y="0.5" width="13" height="12" fill="#ddd"/><rect x="2" y="3" width="10" height="8" fill="#444"/><path d="M4 5 v4 M10 5 v4 M5.5 7 h3" stroke="#ddd"/></svg>
<div style="left:0px;top:702px;width:1280px;height:2px;background:#3c3c3c;"></div>
<div style="left:2px;top:705px;width:4px;height:13px;background:repeating-conic-gradient(#585858 0 25%,#444 0 50%) 0 0/2px 2px;"></div>
<svg style="position:absolute;left:1268px;top:708px;" width="10" height="10" viewBox="0 0 10 10"><path d="M9.5 1.5 L1.5 9.5 M9.5 4.5 L4.5 9.5 M9.5 7.5 L7.5 9.5" stroke="#2a2a2a" stroke-width="1.2"/></svg>
<div style="left:0px;top:719px;width:1280px;height:1px;background:#555555;"></div>
<div style="left:1279px;top:0px;width:1px;height:720px;background:#555555;"></div>
</body></html>
